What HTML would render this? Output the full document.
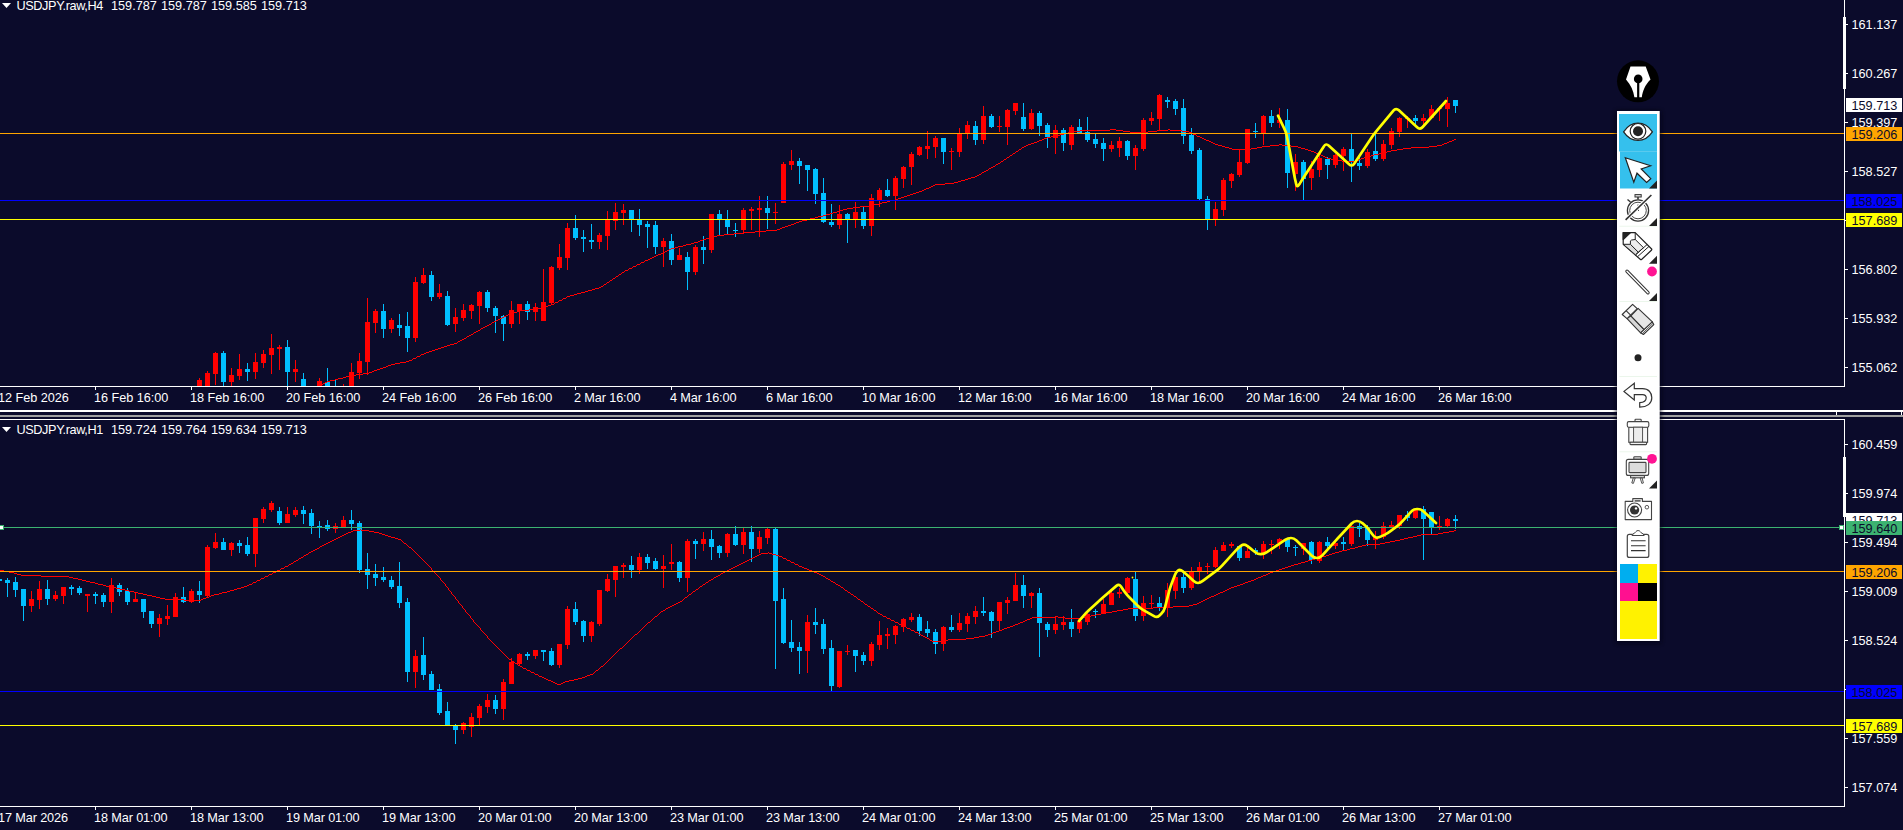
<!DOCTYPE html>
<html><head><meta charset="utf-8"><title>USDJPY</title>
<style>
html,body{margin:0;padding:0;background:#0b0b2b;}
body{width:1903px;height:830px;position:relative;overflow:hidden;font-family:"Liberation Sans",sans-serif;font-size:12.7px;color:#fff;line-height:14px}
.t{position:absolute;white-space:pre;height:14px}
.pl{position:absolute;left:1851.5px;height:14px;white-space:pre}
.bx{position:absolute;left:1846px;width:56px;height:14px;color:#0b0b2b}
.bx span{position:absolute;left:5.5px;top:1px}
.sym{letter-spacing:-0.39px}
.nums{word-spacing:1.5px}

</style></head><body>
<svg width="1903" height="830" viewBox="0 0 1903 830" style="position:absolute;left:0;top:0" shape-rendering="crispEdges">
<g>
<rect x="199" y="378" width="1" height="8" fill="#ff0000"/>
<rect x="197" y="380" width="5" height="6" fill="#ff0000"/>
<rect x="207" y="371" width="1" height="15" fill="#ff0000"/>
<rect x="205" y="373" width="5" height="13" fill="#ff0000"/>
<rect x="215" y="352" width="1" height="33" fill="#ff0000"/>
<rect x="213" y="353" width="5" height="21" fill="#ff0000"/>
<rect x="223" y="351" width="1" height="35" fill="#00bfff"/>
<rect x="221" y="353" width="5" height="29" fill="#00bfff"/>
<rect x="231" y="368" width="1" height="18" fill="#ff0000"/>
<rect x="229" y="375" width="5" height="7" fill="#ff0000"/>
<rect x="239" y="354" width="1" height="26" fill="#ff0000"/>
<rect x="237" y="369" width="5" height="7" fill="#ff0000"/>
<rect x="247" y="363" width="1" height="18" fill="#00bfff"/>
<rect x="245" y="369" width="5" height="3" fill="#00bfff"/>
<rect x="255" y="353" width="1" height="26" fill="#ff0000"/>
<rect x="253" y="362" width="5" height="10" fill="#ff0000"/>
<rect x="263" y="350" width="1" height="18" fill="#ff0000"/>
<rect x="261" y="354" width="5" height="9" fill="#ff0000"/>
<rect x="271" y="334" width="1" height="40" fill="#ff0000"/>
<rect x="269" y="348" width="5" height="7" fill="#ff0000"/>
<rect x="279" y="345" width="1" height="25" fill="#ff0000"/>
<rect x="277" y="347" width="5" height="2" fill="#ff0000"/>
<rect x="287" y="340" width="1" height="46" fill="#00bfff"/>
<rect x="285" y="347" width="5" height="25" fill="#00bfff"/>
<rect x="295" y="360" width="1" height="22" fill="#ff0000"/>
<rect x="293" y="369" width="5" height="3" fill="#ff0000"/>
<rect x="303" y="373" width="1" height="13" fill="#00bfff"/>
<rect x="301" y="379" width="5" height="7" fill="#00bfff"/>
<rect x="319" y="378" width="1" height="8" fill="#ff0000"/>
<rect x="317" y="381" width="5" height="5" fill="#ff0000"/>
<rect x="327" y="368" width="1" height="18" fill="#00bfff"/>
<rect x="325" y="382" width="5" height="4" fill="#00bfff"/>
<rect x="335" y="380" width="1" height="6" fill="#00bfff"/>
<rect x="343" y="384" width="1" height="2" fill="#ff0000"/>
<rect x="351" y="363" width="1" height="23" fill="#ff0000"/>
<rect x="349" y="372" width="5" height="14" fill="#ff0000"/>
<rect x="359" y="353" width="1" height="26" fill="#ff0000"/>
<rect x="357" y="361" width="5" height="12" fill="#ff0000"/>
<rect x="367" y="298" width="1" height="77" fill="#ff0000"/>
<rect x="365" y="322" width="5" height="40" fill="#ff0000"/>
<rect x="375" y="309" width="1" height="24" fill="#ff0000"/>
<rect x="373" y="311" width="5" height="12" fill="#ff0000"/>
<rect x="383" y="304" width="1" height="34" fill="#00bfff"/>
<rect x="381" y="311" width="5" height="18" fill="#00bfff"/>
<rect x="391" y="318" width="1" height="15" fill="#ff0000"/>
<rect x="389" y="320" width="5" height="9" fill="#ff0000"/>
<rect x="399" y="314" width="1" height="22" fill="#00bfff"/>
<rect x="397" y="325" width="5" height="3" fill="#00bfff"/>
<rect x="407" y="312" width="1" height="40" fill="#00bfff"/>
<rect x="405" y="326" width="5" height="12" fill="#00bfff"/>
<rect x="415" y="277" width="1" height="65" fill="#ff0000"/>
<rect x="413" y="282" width="5" height="56" fill="#ff0000"/>
<rect x="423" y="268" width="1" height="16" fill="#ff0000"/>
<rect x="421" y="275" width="5" height="8" fill="#ff0000"/>
<rect x="431" y="271" width="1" height="30" fill="#00bfff"/>
<rect x="429" y="275" width="5" height="22" fill="#00bfff"/>
<rect x="439" y="284" width="1" height="15" fill="#ff0000"/>
<rect x="437" y="293" width="5" height="4" fill="#ff0000"/>
<rect x="447" y="291" width="1" height="35" fill="#00bfff"/>
<rect x="445" y="296" width="5" height="29" fill="#00bfff"/>
<rect x="455" y="308" width="1" height="24" fill="#ff0000"/>
<rect x="453" y="317" width="5" height="7" fill="#ff0000"/>
<rect x="463" y="304" width="1" height="17" fill="#ff0000"/>
<rect x="461" y="310" width="5" height="8" fill="#ff0000"/>
<rect x="471" y="304" width="1" height="15" fill="#ff0000"/>
<rect x="469" y="305" width="5" height="6" fill="#ff0000"/>
<rect x="479" y="291" width="1" height="33" fill="#ff0000"/>
<rect x="477" y="292" width="5" height="14" fill="#ff0000"/>
<rect x="487" y="290" width="1" height="22" fill="#00bfff"/>
<rect x="485" y="292" width="5" height="16" fill="#00bfff"/>
<rect x="495" y="306" width="1" height="27" fill="#00bfff"/>
<rect x="493" y="308" width="5" height="8" fill="#00bfff"/>
<rect x="503" y="315" width="1" height="26" fill="#00bfff"/>
<rect x="501" y="316" width="5" height="8" fill="#00bfff"/>
<rect x="511" y="301" width="1" height="27" fill="#ff0000"/>
<rect x="509" y="310" width="5" height="14" fill="#ff0000"/>
<rect x="519" y="304" width="1" height="20" fill="#ff0000"/>
<rect x="517" y="304" width="5" height="7" fill="#ff0000"/>
<rect x="527" y="301" width="1" height="19" fill="#00bfff"/>
<rect x="525" y="304" width="5" height="8" fill="#00bfff"/>
<rect x="535" y="303" width="1" height="18" fill="#ff0000"/>
<rect x="533" y="307" width="5" height="5" fill="#ff0000"/>
<rect x="543" y="269" width="1" height="52" fill="#ff0000"/>
<rect x="541" y="302" width="5" height="19" fill="#ff0000"/>
<rect x="551" y="266" width="1" height="39" fill="#ff0000"/>
<rect x="549" y="267" width="5" height="36" fill="#ff0000"/>
<rect x="559" y="244" width="1" height="26" fill="#ff0000"/>
<rect x="557" y="257" width="5" height="11" fill="#ff0000"/>
<rect x="567" y="223" width="1" height="47" fill="#ff0000"/>
<rect x="565" y="228" width="5" height="30" fill="#ff0000"/>
<rect x="575" y="215" width="1" height="25" fill="#00bfff"/>
<rect x="573" y="228" width="5" height="10" fill="#00bfff"/>
<rect x="583" y="230" width="1" height="22" fill="#00bfff"/>
<rect x="581" y="237" width="5" height="2" fill="#00bfff"/>
<rect x="591" y="224" width="1" height="25" fill="#00bfff"/>
<rect x="589" y="240" width="5" height="2" fill="#00bfff"/>
<rect x="599" y="233" width="1" height="16" fill="#ff0000"/>
<rect x="597" y="235" width="5" height="7" fill="#ff0000"/>
<rect x="607" y="211" width="1" height="39" fill="#ff0000"/>
<rect x="605" y="219" width="5" height="17" fill="#ff0000"/>
<rect x="615" y="203" width="1" height="27" fill="#ff0000"/>
<rect x="613" y="212" width="5" height="9" fill="#ff0000"/>
<rect x="623" y="204" width="1" height="21" fill="#ff0000"/>
<rect x="621" y="210" width="5" height="3" fill="#ff0000"/>
<rect x="631" y="210" width="1" height="22" fill="#00bfff"/>
<rect x="629" y="210" width="5" height="9" fill="#00bfff"/>
<rect x="639" y="209" width="1" height="27" fill="#00bfff"/>
<rect x="637" y="220" width="5" height="5" fill="#00bfff"/>
<rect x="647" y="221" width="1" height="27" fill="#00bfff"/>
<rect x="645" y="224" width="5" height="3" fill="#00bfff"/>
<rect x="655" y="221" width="1" height="33" fill="#00bfff"/>
<rect x="653" y="225" width="5" height="22" fill="#00bfff"/>
<rect x="663" y="238" width="1" height="29" fill="#ff0000"/>
<rect x="661" y="241" width="5" height="6" fill="#ff0000"/>
<rect x="671" y="234" width="1" height="31" fill="#00bfff"/>
<rect x="669" y="241" width="5" height="19" fill="#00bfff"/>
<rect x="679" y="248" width="1" height="12" fill="#ff0000"/>
<rect x="677" y="255" width="5" height="5" fill="#ff0000"/>
<rect x="687" y="252" width="1" height="38" fill="#00bfff"/>
<rect x="685" y="257" width="5" height="15" fill="#00bfff"/>
<rect x="695" y="245" width="1" height="30" fill="#ff0000"/>
<rect x="693" y="247" width="5" height="25" fill="#ff0000"/>
<rect x="703" y="236" width="1" height="28" fill="#00bfff"/>
<rect x="701" y="247" width="5" height="3" fill="#00bfff"/>
<rect x="711" y="214" width="1" height="39" fill="#ff0000"/>
<rect x="709" y="214" width="5" height="36" fill="#ff0000"/>
<rect x="719" y="210" width="1" height="25" fill="#00bfff"/>
<rect x="717" y="214" width="5" height="5" fill="#00bfff"/>
<rect x="727" y="210" width="1" height="24" fill="#00bfff"/>
<rect x="725" y="220" width="5" height="7" fill="#00bfff"/>
<rect x="735" y="223" width="1" height="14" fill="#00bfff"/>
<rect x="733" y="230" width="5" height="1" fill="#00bfff"/>
<rect x="743" y="208" width="1" height="25" fill="#ff0000"/>
<rect x="741" y="210" width="5" height="20" fill="#ff0000"/>
<rect x="751" y="207" width="1" height="23" fill="#ff0000"/>
<rect x="749" y="209" width="5" height="2" fill="#ff0000"/>
<rect x="759" y="196" width="1" height="41" fill="#ff0000"/>
<rect x="757" y="208" width="5" height="2" fill="#ff0000"/>
<rect x="767" y="196" width="1" height="33" fill="#00bfff"/>
<rect x="765" y="208" width="5" height="5" fill="#00bfff"/>
<rect x="775" y="203" width="1" height="21" fill="#ff0000"/>
<rect x="773" y="212" width="5" height="1" fill="#ff0000"/>
<rect x="783" y="162" width="1" height="41" fill="#ff0000"/>
<rect x="781" y="164" width="5" height="39" fill="#ff0000"/>
<rect x="791" y="150" width="1" height="20" fill="#ff0000"/>
<rect x="789" y="161" width="5" height="4" fill="#ff0000"/>
<rect x="799" y="158" width="1" height="26" fill="#00bfff"/>
<rect x="797" y="161" width="5" height="5" fill="#00bfff"/>
<rect x="807" y="165" width="1" height="26" fill="#00bfff"/>
<rect x="805" y="165" width="5" height="5" fill="#00bfff"/>
<rect x="815" y="168" width="1" height="36" fill="#00bfff"/>
<rect x="813" y="169" width="5" height="25" fill="#00bfff"/>
<rect x="823" y="178" width="1" height="45" fill="#00bfff"/>
<rect x="821" y="193" width="5" height="29" fill="#00bfff"/>
<rect x="831" y="204" width="1" height="23" fill="#00bfff"/>
<rect x="829" y="222" width="5" height="3" fill="#00bfff"/>
<rect x="839" y="205" width="1" height="24" fill="#ff0000"/>
<rect x="837" y="214" width="5" height="11" fill="#ff0000"/>
<rect x="847" y="213" width="1" height="30" fill="#00bfff"/>
<rect x="845" y="214" width="5" height="6" fill="#00bfff"/>
<rect x="855" y="202" width="1" height="26" fill="#ff0000"/>
<rect x="853" y="212" width="5" height="8" fill="#ff0000"/>
<rect x="863" y="206" width="1" height="23" fill="#00bfff"/>
<rect x="861" y="212" width="5" height="14" fill="#00bfff"/>
<rect x="871" y="194" width="1" height="42" fill="#ff0000"/>
<rect x="869" y="198" width="5" height="28" fill="#ff0000"/>
<rect x="879" y="188" width="1" height="19" fill="#ff0000"/>
<rect x="877" y="190" width="5" height="10" fill="#ff0000"/>
<rect x="887" y="179" width="1" height="18" fill="#00bfff"/>
<rect x="885" y="190" width="5" height="6" fill="#00bfff"/>
<rect x="895" y="176" width="1" height="34" fill="#ff0000"/>
<rect x="893" y="178" width="5" height="18" fill="#ff0000"/>
<rect x="903" y="166" width="1" height="22" fill="#ff0000"/>
<rect x="901" y="167" width="5" height="12" fill="#ff0000"/>
<rect x="911" y="152" width="1" height="33" fill="#ff0000"/>
<rect x="909" y="154" width="5" height="13" fill="#ff0000"/>
<rect x="919" y="146" width="1" height="10" fill="#ff0000"/>
<rect x="917" y="147" width="5" height="8" fill="#ff0000"/>
<rect x="927" y="131" width="1" height="28" fill="#ff0000"/>
<rect x="925" y="146" width="5" height="3" fill="#ff0000"/>
<rect x="935" y="136" width="1" height="22" fill="#ff0000"/>
<rect x="933" y="138" width="5" height="9" fill="#ff0000"/>
<rect x="943" y="138" width="1" height="26" fill="#00bfff"/>
<rect x="941" y="138" width="5" height="14" fill="#00bfff"/>
<rect x="951" y="148" width="1" height="22" fill="#ff0000"/>
<rect x="949" y="151" width="5" height="1" fill="#ff0000"/>
<rect x="959" y="128" width="1" height="29" fill="#ff0000"/>
<rect x="957" y="134" width="5" height="18" fill="#ff0000"/>
<rect x="967" y="121" width="1" height="18" fill="#ff0000"/>
<rect x="965" y="125" width="5" height="8" fill="#ff0000"/>
<rect x="975" y="121" width="1" height="24" fill="#00bfff"/>
<rect x="973" y="126" width="5" height="14" fill="#00bfff"/>
<rect x="983" y="106" width="1" height="38" fill="#ff0000"/>
<rect x="981" y="116" width="5" height="24" fill="#ff0000"/>
<rect x="991" y="114" width="1" height="14" fill="#00bfff"/>
<rect x="989" y="116" width="5" height="11" fill="#00bfff"/>
<rect x="999" y="116" width="1" height="16" fill="#ff0000"/>
<rect x="997" y="126" width="5" height="1" fill="#ff0000"/>
<rect x="1007" y="109" width="1" height="36" fill="#ff0000"/>
<rect x="1005" y="110" width="5" height="17" fill="#ff0000"/>
<rect x="1015" y="103" width="1" height="12" fill="#ff0000"/>
<rect x="1013" y="103" width="5" height="8" fill="#ff0000"/>
<rect x="1023" y="103" width="1" height="28" fill="#00bfff"/>
<rect x="1021" y="117" width="5" height="12" fill="#00bfff"/>
<rect x="1031" y="109" width="1" height="21" fill="#ff0000"/>
<rect x="1029" y="113" width="5" height="16" fill="#ff0000"/>
<rect x="1039" y="111" width="1" height="25" fill="#00bfff"/>
<rect x="1037" y="113" width="5" height="13" fill="#00bfff"/>
<rect x="1047" y="123" width="1" height="25" fill="#00bfff"/>
<rect x="1045" y="125" width="5" height="12" fill="#00bfff"/>
<rect x="1055" y="125" width="1" height="29" fill="#ff0000"/>
<rect x="1053" y="130" width="5" height="8" fill="#ff0000"/>
<rect x="1063" y="128" width="1" height="23" fill="#00bfff"/>
<rect x="1061" y="130" width="5" height="13" fill="#00bfff"/>
<rect x="1071" y="125" width="1" height="25" fill="#ff0000"/>
<rect x="1069" y="127" width="5" height="18" fill="#ff0000"/>
<rect x="1079" y="119" width="1" height="14" fill="#00bfff"/>
<rect x="1077" y="127" width="5" height="6" fill="#00bfff"/>
<rect x="1087" y="117" width="1" height="25" fill="#00bfff"/>
<rect x="1085" y="132" width="5" height="8" fill="#00bfff"/>
<rect x="1095" y="134" width="1" height="14" fill="#00bfff"/>
<rect x="1093" y="139" width="5" height="5" fill="#00bfff"/>
<rect x="1103" y="138" width="1" height="23" fill="#00bfff"/>
<rect x="1101" y="143" width="5" height="6" fill="#00bfff"/>
<rect x="1111" y="141" width="1" height="11" fill="#ff0000"/>
<rect x="1109" y="145" width="5" height="4" fill="#ff0000"/>
<rect x="1119" y="137" width="1" height="20" fill="#ff0000"/>
<rect x="1117" y="141" width="5" height="7" fill="#ff0000"/>
<rect x="1127" y="140" width="1" height="20" fill="#00bfff"/>
<rect x="1125" y="141" width="5" height="15" fill="#00bfff"/>
<rect x="1135" y="145" width="1" height="25" fill="#ff0000"/>
<rect x="1133" y="148" width="5" height="8" fill="#ff0000"/>
<rect x="1143" y="118" width="1" height="33" fill="#ff0000"/>
<rect x="1141" y="120" width="5" height="29" fill="#ff0000"/>
<rect x="1151" y="112" width="1" height="13" fill="#ff0000"/>
<rect x="1149" y="118" width="5" height="3" fill="#ff0000"/>
<rect x="1159" y="94" width="1" height="36" fill="#ff0000"/>
<rect x="1157" y="95" width="5" height="24" fill="#ff0000"/>
<rect x="1167" y="97" width="1" height="11" fill="#00bfff"/>
<rect x="1165" y="100" width="5" height="2" fill="#00bfff"/>
<rect x="1175" y="99" width="1" height="16" fill="#00bfff"/>
<rect x="1173" y="101" width="5" height="8" fill="#00bfff"/>
<rect x="1183" y="99" width="1" height="45" fill="#00bfff"/>
<rect x="1181" y="108" width="5" height="28" fill="#00bfff"/>
<rect x="1191" y="128" width="1" height="26" fill="#00bfff"/>
<rect x="1189" y="135" width="5" height="16" fill="#00bfff"/>
<rect x="1199" y="148" width="1" height="52" fill="#00bfff"/>
<rect x="1197" y="150" width="5" height="49" fill="#00bfff"/>
<rect x="1207" y="196" width="1" height="34" fill="#00bfff"/>
<rect x="1205" y="199" width="5" height="20" fill="#00bfff"/>
<rect x="1215" y="202" width="1" height="24" fill="#ff0000"/>
<rect x="1213" y="209" width="5" height="10" fill="#ff0000"/>
<rect x="1223" y="178" width="1" height="38" fill="#ff0000"/>
<rect x="1221" y="180" width="5" height="30" fill="#ff0000"/>
<rect x="1231" y="173" width="1" height="15" fill="#ff0000"/>
<rect x="1229" y="174" width="5" height="7" fill="#ff0000"/>
<rect x="1239" y="149" width="1" height="28" fill="#ff0000"/>
<rect x="1237" y="162" width="5" height="13" fill="#ff0000"/>
<rect x="1247" y="129" width="1" height="35" fill="#ff0000"/>
<rect x="1245" y="129" width="5" height="34" fill="#ff0000"/>
<rect x="1255" y="123" width="1" height="15" fill="#00bfff"/>
<rect x="1253" y="131" width="5" height="1" fill="#00bfff"/>
<rect x="1263" y="115" width="1" height="30" fill="#ff0000"/>
<rect x="1261" y="116" width="5" height="17" fill="#ff0000"/>
<rect x="1271" y="110" width="1" height="17" fill="#00bfff"/>
<rect x="1269" y="116" width="5" height="7" fill="#00bfff"/>
<rect x="1279" y="108" width="1" height="20" fill="#ff0000"/>
<rect x="1277" y="120" width="5" height="3" fill="#ff0000"/>
<rect x="1287" y="109" width="1" height="79" fill="#00bfff"/>
<rect x="1285" y="120" width="5" height="53" fill="#00bfff"/>
<rect x="1295" y="154" width="1" height="37" fill="#ff0000"/>
<rect x="1293" y="162" width="5" height="12" fill="#ff0000"/>
<rect x="1303" y="160" width="1" height="40" fill="#00bfff"/>
<rect x="1301" y="162" width="5" height="17" fill="#00bfff"/>
<rect x="1311" y="161" width="1" height="29" fill="#ff0000"/>
<rect x="1309" y="169" width="5" height="9" fill="#ff0000"/>
<rect x="1319" y="154" width="1" height="23" fill="#ff0000"/>
<rect x="1317" y="158" width="5" height="12" fill="#ff0000"/>
<rect x="1327" y="157" width="1" height="22" fill="#00bfff"/>
<rect x="1325" y="159" width="5" height="6" fill="#00bfff"/>
<rect x="1335" y="154" width="1" height="14" fill="#ff0000"/>
<rect x="1333" y="155" width="5" height="10" fill="#ff0000"/>
<rect x="1343" y="147" width="1" height="24" fill="#ff0000"/>
<rect x="1341" y="149" width="5" height="7" fill="#ff0000"/>
<rect x="1351" y="134" width="1" height="48" fill="#00bfff"/>
<rect x="1349" y="149" width="5" height="13" fill="#00bfff"/>
<rect x="1359" y="154" width="1" height="16" fill="#00bfff"/>
<rect x="1357" y="163" width="5" height="3" fill="#00bfff"/>
<rect x="1367" y="149" width="1" height="19" fill="#ff0000"/>
<rect x="1365" y="152" width="5" height="14" fill="#ff0000"/>
<rect x="1375" y="134" width="1" height="27" fill="#00bfff"/>
<rect x="1373" y="151" width="5" height="8" fill="#00bfff"/>
<rect x="1383" y="140" width="1" height="21" fill="#ff0000"/>
<rect x="1381" y="144" width="5" height="15" fill="#ff0000"/>
<rect x="1391" y="128" width="1" height="21" fill="#ff0000"/>
<rect x="1389" y="131" width="5" height="14" fill="#ff0000"/>
<rect x="1399" y="117" width="1" height="20" fill="#ff0000"/>
<rect x="1397" y="118" width="5" height="14" fill="#ff0000"/>
<rect x="1407" y="116" width="1" height="12" fill="#ff0000"/>
<rect x="1405" y="118" width="5" height="1" fill="#ff0000"/>
<rect x="1415" y="115" width="1" height="10" fill="#00bfff"/>
<rect x="1413" y="118" width="5" height="3" fill="#00bfff"/>
<rect x="1423" y="114" width="1" height="11" fill="#ff0000"/>
<rect x="1421" y="118" width="5" height="3" fill="#ff0000"/>
<rect x="1431" y="105" width="1" height="14" fill="#ff0000"/>
<rect x="1429" y="109" width="5" height="9" fill="#ff0000"/>
<rect x="1439" y="106" width="1" height="15" fill="#ff0000"/>
<rect x="1437" y="108" width="5" height="1" fill="#ff0000"/>
<rect x="1447" y="97" width="1" height="30" fill="#ff0000"/>
<rect x="1445" y="103" width="5" height="6" fill="#ff0000"/>
<rect x="1455" y="100" width="1" height="13" fill="#00bfff"/>
<rect x="1453" y="100" width="5" height="6" fill="#00bfff"/>
</g>
<path d="M316,386h2v1h-2zM318,385h2v1h-2zM320,384h3v1h-3zM323,383h2v1h-2zM325,382h2v1h-2zM327,381h3v1h-3zM330,380h5v1h-5zM335,379h3v1h-3zM338,378h5v1h-5zM343,377h3v1h-3zM346,376h5v1h-5zM351,375h5v1h-5zM356,374h7v1h-7zM363,373h6v1h-6zM369,372h3v1h-3zM372,371h2v1h-2zM374,370h3v1h-3zM377,369h3v1h-3zM380,368h3v1h-3zM383,367h3v1h-3zM386,366h2v1h-2zM388,365h3v1h-3zM391,364h4v1h-4zM395,363h5v1h-5zM400,362h6v1h-6zM406,361h3v1h-3zM409,360h3v1h-3zM412,359h1v1h-1zM413,358h3v1h-3zM416,357h1v1h-1zM417,356h3v1h-3zM420,355h1v1h-1zM421,354h3v1h-3zM424,353h2v1h-2zM426,352h3v1h-3zM429,351h3v1h-3zM432,350h3v1h-3zM435,349h3v1h-3zM438,348h3v1h-3zM441,347h3v1h-3zM444,346h3v1h-3zM447,345h3v1h-3zM450,344h4v1h-4zM454,343h3v1h-3zM457,342h1v1h-1zM458,341h2v1h-2zM460,340h2v1h-2zM462,339h2v1h-2zM464,338h2v1h-2zM466,337h1v1h-1zM467,336h2v1h-2zM469,335h2v1h-2zM471,334h2v1h-2zM473,333h1v1h-1zM474,332h2v1h-2zM476,331h2v1h-2zM478,330h2v1h-2zM480,329h1v1h-1zM481,328h2v1h-2zM483,327h2v1h-2zM485,326h2v1h-2zM487,325h2v1h-2zM489,324h2v1h-2zM491,323h1v1h-1zM492,322h2v1h-2zM494,321h2v1h-2zM496,320h2v1h-2zM498,319h2v1h-2zM500,318h2v1h-2zM502,317h2v1h-2zM504,316h2v1h-2zM506,315h2v1h-2zM508,314h3v1h-3zM511,313h3v1h-3zM514,312h3v1h-3zM517,311h2v1h-2zM519,310h10v1h-10zM529,309h9v1h-9zM538,308h3v1h-3zM541,307h3v1h-3zM544,306h4v1h-4zM548,305h3v1h-3zM551,304h3v1h-3zM554,303h1v1h-1zM555,302h3v1h-3zM558,301h1v1h-1zM559,300h3v1h-3zM562,299h1v1h-1zM563,298h3v1h-3zM566,297h1v1h-1zM567,296h3v1h-3zM570,295h4v1h-4zM574,294h3v1h-3zM577,293h4v1h-4zM581,292h4v1h-4zM585,291h3v1h-3zM588,290h4v1h-4zM592,289h3v1h-3zM595,288h4v1h-4zM599,287h2v1h-2zM601,286h2v1h-2zM603,285h1v1h-1zM604,284h2v1h-2zM606,283h1v1h-1zM607,282h2v1h-2zM609,281h1v1h-1zM610,280h2v1h-2zM612,279h1v1h-1zM613,278h2v1h-2zM615,277h1v1h-1zM616,276h2v1h-2zM618,275h1v1h-1zM619,274h2v1h-2zM621,273h1v1h-1zM622,272h2v1h-2zM624,271h1v1h-1zM625,270h3v1h-3zM628,269h1v1h-1zM629,268h3v1h-3zM632,267h1v1h-1zM633,266h3v1h-3zM636,265h1v1h-1zM637,264h3v1h-3zM640,263h1v1h-1zM641,262h3v1h-3zM644,261h1v1h-1zM645,260h3v1h-3zM648,259h2v1h-2zM650,258h2v1h-2zM652,257h2v1h-2zM654,256h2v1h-2zM656,255h2v1h-2zM658,254h3v1h-3zM661,253h2v1h-2zM663,252h2v1h-2zM665,251h2v1h-2zM667,250h2v1h-2zM669,249h2v1h-2zM671,248h4v1h-4zM675,247h3v1h-3zM678,246h5v1h-5zM683,245h3v1h-3zM686,244h5v1h-5zM691,243h3v1h-3zM694,242h4v1h-4zM698,241h2v1h-2zM700,240h3v1h-3zM703,239h3v1h-3zM706,238h3v1h-3zM709,237h2v1h-2zM711,236h6v1h-6zM717,235h7v1h-7zM724,234h10v1h-10zM734,233h10v1h-10zM744,232h11v1h-11zM755,231h11v1h-11zM766,230h11v1h-11zM777,229h3v1h-3zM780,228h2v1h-2zM782,227h3v1h-3zM785,226h3v1h-3zM788,225h3v1h-3zM791,224h3v1h-3zM794,223h2v1h-2zM796,222h3v1h-3zM799,221h3v1h-3zM802,220h5v1h-5zM807,219h3v1h-3zM810,218h5v1h-5zM815,217h3v1h-3zM818,216h5v1h-5zM823,215h3v1h-3zM826,214h4v1h-4zM830,213h3v1h-3zM833,212h4v1h-4zM837,211h3v1h-3zM840,210h3v1h-3zM843,209h4v1h-4zM847,208h6v1h-6zM853,207h7v1h-7zM860,206h9v1h-9zM869,205h5v1h-5zM874,204h5v1h-5zM879,203h3v1h-3zM882,202h5v1h-5zM887,201h3v1h-3zM890,200h5v1h-5zM895,199h3v1h-3zM898,198h3v1h-3zM901,197h3v1h-3zM904,196h3v1h-3zM907,195h3v1h-3zM910,194h3v1h-3zM913,193h3v1h-3zM916,192h3v1h-3zM919,191h3v1h-3zM922,190h2v1h-2zM924,189h2v1h-2zM926,188h3v1h-3zM929,187h2v1h-2zM931,186h2v1h-2zM933,185h2v1h-2zM935,184h10v1h-10zM945,183h9v1h-9zM954,182h4v1h-4zM958,181h3v1h-3zM961,180h4v1h-4zM965,179h3v1h-3zM968,178h3v1h-3zM971,177h4v1h-4zM975,176h2v1h-2zM977,175h2v1h-2zM979,174h2v1h-2zM981,173h1v1h-1zM982,172h2v1h-2zM984,171h2v1h-2zM986,170h2v1h-2zM988,169h1v1h-1zM989,168h2v1h-2zM991,167h2v1h-2zM993,166h2v1h-2zM995,165h1v1h-1zM996,164h2v1h-2zM998,163h2v1h-2zM1000,162h1v1h-1zM1001,161h2v1h-2zM1003,160h1v1h-1zM1004,159h2v1h-2zM1006,158h1v1h-1zM1007,157h2v1h-2zM1009,156h1v1h-1zM1010,155h2v1h-2zM1012,154h1v1h-1zM1013,153h2v1h-2zM1015,152h1v1h-1zM1016,151h2v1h-2zM1018,150h1v1h-1zM1019,149h2v1h-2zM1021,148h1v1h-1zM1022,147h2v1h-2zM1024,146h2v1h-2zM1026,145h2v1h-2zM1028,144h3v1h-3zM1031,143h3v1h-3zM1034,142h3v1h-3zM1037,141h2v1h-2zM1039,140h3v1h-3zM1042,139h2v1h-2zM1044,138h3v1h-3zM1047,137h4v1h-4zM1051,136h4v1h-4zM1055,135h5v1h-5zM1060,134h4v1h-4zM1064,133h4v1h-4zM1068,132h5v1h-5zM1073,131h7v1h-7zM1080,130h30v1h-30zM1110,129h6v1h-6zM1116,130h7v1h-7zM1123,131h7v1h-7zM1130,132h18v1h-18zM1148,131h9v1h-9zM1157,130h11v1h-11zM1168,129h2v1h-2zM1170,130h12v1h-12zM1182,131h7v1h-7zM1189,132h3v1h-3zM1192,133h1v1h-1zM1193,134h3v1h-3zM1196,135h1v1h-1zM1197,136h3v1h-3zM1200,137h2v1h-2zM1202,138h2v1h-2zM1204,139h2v1h-2zM1206,140h3v1h-3zM1209,141h2v1h-2zM1211,142h2v1h-2zM1213,143h2v1h-2zM1215,144h3v1h-3zM1218,145h4v1h-4zM1222,146h3v1h-3zM1225,147h4v1h-4zM1229,148h3v1h-3zM1232,149h19v1h-19zM1251,148h6v1h-6zM1257,147h5v1h-5zM1262,146h8v1h-8zM1270,145h9v1h-9zM1279,144h3v1h-3zM1282,145h9v1h-9zM1291,146h7v1h-7zM1298,147h3v1h-3zM1301,148h4v1h-4zM1305,149h3v1h-3zM1308,150h3v1h-3zM1311,151h3v1h-3zM1314,152h2v1h-2zM1316,153h2v1h-2zM1318,154h3v1h-3zM1321,155h2v1h-2zM1323,156h2v1h-2zM1325,157h2v1h-2zM1327,158h4v1h-4zM1331,159h5v1h-5zM1336,160h6v1h-6zM1342,161h14v1h-14zM1356,160h3v1h-3zM1359,159h2v1h-2zM1361,158h3v1h-3zM1364,157h3v1h-3zM1367,156h4v1h-4zM1371,155h3v1h-3zM1374,154h5v1h-5zM1379,153h3v1h-3zM1382,152h5v1h-5zM1387,151h4v1h-4zM1391,150h6v1h-6zM1397,149h6v1h-6zM1403,148h8v1h-8zM1411,147h18v1h-18zM1429,146h8v1h-8zM1437,145h5v1h-5zM1442,144h2v1h-2zM1444,143h3v1h-3zM1447,142h2v1h-2zM1449,141h3v1h-3zM1452,140h2v1h-2zM1454,139h2v1h-2z" fill="#ff0000"/>
<g>
<rect x="-1" y="578" width="1" height="5" fill="#00bfff"/>
<rect x="-3" y="579" width="5" height="2" fill="#00bfff"/>
<rect x="7" y="578" width="1" height="19" fill="#00bfff"/>
<rect x="5" y="580" width="5" height="3" fill="#00bfff"/>
<rect x="15" y="577" width="1" height="20" fill="#00bfff"/>
<rect x="13" y="582" width="5" height="8" fill="#00bfff"/>
<rect x="23" y="589" width="1" height="32" fill="#00bfff"/>
<rect x="21" y="589" width="5" height="17" fill="#00bfff"/>
<rect x="31" y="591" width="1" height="21" fill="#ff0000"/>
<rect x="29" y="599" width="5" height="7" fill="#ff0000"/>
<rect x="39" y="581" width="1" height="28" fill="#ff0000"/>
<rect x="37" y="589" width="5" height="11" fill="#ff0000"/>
<rect x="47" y="580" width="1" height="25" fill="#00bfff"/>
<rect x="45" y="589" width="5" height="10" fill="#00bfff"/>
<rect x="55" y="591" width="1" height="10" fill="#ff0000"/>
<rect x="53" y="595" width="5" height="4" fill="#ff0000"/>
<rect x="63" y="587" width="1" height="17" fill="#ff0000"/>
<rect x="61" y="587" width="5" height="9" fill="#ff0000"/>
<rect x="71" y="585" width="1" height="10" fill="#00bfff"/>
<rect x="69" y="587" width="5" height="2" fill="#00bfff"/>
<rect x="79" y="586" width="1" height="9" fill="#00bfff"/>
<rect x="77" y="588" width="5" height="5" fill="#00bfff"/>
<rect x="87" y="594" width="1" height="18" fill="#ff0000"/>
<rect x="85" y="594" width="5" height="2" fill="#ff0000"/>
<rect x="95" y="592" width="1" height="12" fill="#00bfff"/>
<rect x="93" y="594" width="5" height="2" fill="#00bfff"/>
<rect x="103" y="593" width="1" height="14" fill="#00bfff"/>
<rect x="101" y="595" width="5" height="7" fill="#00bfff"/>
<rect x="111" y="578" width="1" height="35" fill="#ff0000"/>
<rect x="109" y="585" width="5" height="17" fill="#ff0000"/>
<rect x="119" y="583" width="1" height="13" fill="#00bfff"/>
<rect x="117" y="585" width="5" height="7" fill="#00bfff"/>
<rect x="127" y="588" width="1" height="17" fill="#00bfff"/>
<rect x="125" y="591" width="5" height="11" fill="#00bfff"/>
<rect x="135" y="593" width="1" height="9" fill="#ff0000"/>
<rect x="133" y="599" width="5" height="3" fill="#ff0000"/>
<rect x="143" y="599" width="1" height="19" fill="#00bfff"/>
<rect x="141" y="599" width="5" height="13" fill="#00bfff"/>
<rect x="151" y="611" width="1" height="17" fill="#00bfff"/>
<rect x="149" y="611" width="5" height="13" fill="#00bfff"/>
<rect x="159" y="614" width="1" height="23" fill="#ff0000"/>
<rect x="157" y="618" width="5" height="6" fill="#ff0000"/>
<rect x="167" y="605" width="1" height="20" fill="#ff0000"/>
<rect x="165" y="616" width="5" height="3" fill="#ff0000"/>
<rect x="175" y="593" width="1" height="24" fill="#ff0000"/>
<rect x="173" y="597" width="5" height="20" fill="#ff0000"/>
<rect x="183" y="587" width="1" height="16" fill="#00bfff"/>
<rect x="181" y="597" width="5" height="5" fill="#00bfff"/>
<rect x="191" y="589" width="1" height="14" fill="#ff0000"/>
<rect x="189" y="591" width="5" height="11" fill="#ff0000"/>
<rect x="199" y="581" width="1" height="22" fill="#00bfff"/>
<rect x="197" y="591" width="5" height="4" fill="#00bfff"/>
<rect x="207" y="545" width="1" height="52" fill="#ff0000"/>
<rect x="205" y="547" width="5" height="49" fill="#ff0000"/>
<rect x="215" y="533" width="1" height="16" fill="#ff0000"/>
<rect x="213" y="542" width="5" height="6" fill="#ff0000"/>
<rect x="223" y="538" width="1" height="12" fill="#00bfff"/>
<rect x="221" y="542" width="5" height="8" fill="#00bfff"/>
<rect x="231" y="542" width="1" height="14" fill="#ff0000"/>
<rect x="229" y="543" width="5" height="7" fill="#ff0000"/>
<rect x="239" y="540" width="1" height="13" fill="#00bfff"/>
<rect x="237" y="543" width="5" height="3" fill="#00bfff"/>
<rect x="247" y="537" width="1" height="19" fill="#00bfff"/>
<rect x="245" y="545" width="5" height="9" fill="#00bfff"/>
<rect x="255" y="518" width="1" height="49" fill="#ff0000"/>
<rect x="253" y="518" width="5" height="36" fill="#ff0000"/>
<rect x="263" y="507" width="1" height="16" fill="#ff0000"/>
<rect x="261" y="509" width="5" height="10" fill="#ff0000"/>
<rect x="271" y="501" width="1" height="11" fill="#ff0000"/>
<rect x="269" y="503" width="5" height="7" fill="#ff0000"/>
<rect x="279" y="507" width="1" height="18" fill="#00bfff"/>
<rect x="277" y="511" width="5" height="12" fill="#00bfff"/>
<rect x="287" y="507" width="1" height="16" fill="#ff0000"/>
<rect x="285" y="514" width="5" height="9" fill="#ff0000"/>
<rect x="295" y="507" width="1" height="10" fill="#ff0000"/>
<rect x="293" y="510" width="5" height="5" fill="#ff0000"/>
<rect x="303" y="506" width="1" height="18" fill="#00bfff"/>
<rect x="301" y="510" width="5" height="4" fill="#00bfff"/>
<rect x="311" y="509" width="1" height="25" fill="#00bfff"/>
<rect x="309" y="513" width="5" height="13" fill="#00bfff"/>
<rect x="319" y="521" width="1" height="17" fill="#00bfff"/>
<rect x="317" y="526" width="5" height="1" fill="#00bfff"/>
<rect x="327" y="520" width="1" height="11" fill="#00bfff"/>
<rect x="325" y="525" width="5" height="4" fill="#00bfff"/>
<rect x="335" y="523" width="1" height="10" fill="#ff0000"/>
<rect x="333" y="526" width="5" height="3" fill="#ff0000"/>
<rect x="343" y="516" width="1" height="11" fill="#ff0000"/>
<rect x="341" y="520" width="5" height="7" fill="#ff0000"/>
<rect x="351" y="510" width="1" height="20" fill="#00bfff"/>
<rect x="349" y="520" width="5" height="4" fill="#00bfff"/>
<rect x="359" y="521" width="1" height="52" fill="#00bfff"/>
<rect x="357" y="523" width="5" height="47" fill="#00bfff"/>
<rect x="367" y="553" width="1" height="36" fill="#00bfff"/>
<rect x="365" y="569" width="5" height="6" fill="#00bfff"/>
<rect x="375" y="564" width="1" height="22" fill="#00bfff"/>
<rect x="373" y="574" width="5" height="4" fill="#00bfff"/>
<rect x="383" y="567" width="1" height="15" fill="#00bfff"/>
<rect x="381" y="577" width="5" height="3" fill="#00bfff"/>
<rect x="391" y="576" width="1" height="13" fill="#00bfff"/>
<rect x="389" y="580" width="5" height="7" fill="#00bfff"/>
<rect x="399" y="562" width="1" height="46" fill="#00bfff"/>
<rect x="397" y="586" width="5" height="17" fill="#00bfff"/>
<rect x="407" y="598" width="1" height="84" fill="#00bfff"/>
<rect x="405" y="602" width="5" height="70" fill="#00bfff"/>
<rect x="415" y="650" width="1" height="38" fill="#ff0000"/>
<rect x="413" y="656" width="5" height="16" fill="#ff0000"/>
<rect x="423" y="637" width="1" height="43" fill="#00bfff"/>
<rect x="421" y="655" width="5" height="20" fill="#00bfff"/>
<rect x="431" y="671" width="1" height="19" fill="#00bfff"/>
<rect x="429" y="674" width="5" height="16" fill="#00bfff"/>
<rect x="439" y="684" width="1" height="31" fill="#00bfff"/>
<rect x="437" y="689" width="5" height="24" fill="#00bfff"/>
<rect x="447" y="702" width="1" height="23" fill="#00bfff"/>
<rect x="445" y="711" width="5" height="14" fill="#00bfff"/>
<rect x="455" y="724" width="1" height="20" fill="#00bfff"/>
<rect x="453" y="726" width="5" height="4" fill="#00bfff"/>
<rect x="463" y="722" width="1" height="12" fill="#ff0000"/>
<rect x="461" y="723" width="5" height="7" fill="#ff0000"/>
<rect x="471" y="713" width="1" height="24" fill="#ff0000"/>
<rect x="469" y="717" width="5" height="10" fill="#ff0000"/>
<rect x="479" y="704" width="1" height="21" fill="#ff0000"/>
<rect x="477" y="706" width="5" height="12" fill="#ff0000"/>
<rect x="487" y="694" width="1" height="19" fill="#ff0000"/>
<rect x="485" y="700" width="5" height="7" fill="#ff0000"/>
<rect x="495" y="695" width="1" height="19" fill="#00bfff"/>
<rect x="493" y="700" width="5" height="9" fill="#00bfff"/>
<rect x="503" y="679" width="1" height="41" fill="#ff0000"/>
<rect x="501" y="682" width="5" height="27" fill="#ff0000"/>
<rect x="511" y="658" width="1" height="26" fill="#ff0000"/>
<rect x="509" y="662" width="5" height="22" fill="#ff0000"/>
<rect x="519" y="653" width="1" height="13" fill="#ff0000"/>
<rect x="517" y="654" width="5" height="10" fill="#ff0000"/>
<rect x="527" y="652" width="1" height="8" fill="#00bfff"/>
<rect x="525" y="654" width="5" height="2" fill="#00bfff"/>
<rect x="535" y="650" width="1" height="9" fill="#ff0000"/>
<rect x="533" y="650" width="5" height="6" fill="#ff0000"/>
<rect x="543" y="650" width="1" height="11" fill="#00bfff"/>
<rect x="541" y="650" width="5" height="2" fill="#00bfff"/>
<rect x="551" y="648" width="1" height="18" fill="#00bfff"/>
<rect x="549" y="651" width="5" height="14" fill="#00bfff"/>
<rect x="559" y="644" width="1" height="24" fill="#ff0000"/>
<rect x="557" y="644" width="5" height="21" fill="#ff0000"/>
<rect x="567" y="606" width="1" height="43" fill="#ff0000"/>
<rect x="565" y="609" width="5" height="36" fill="#ff0000"/>
<rect x="575" y="602" width="1" height="23" fill="#00bfff"/>
<rect x="573" y="609" width="5" height="13" fill="#00bfff"/>
<rect x="583" y="620" width="1" height="22" fill="#00bfff"/>
<rect x="581" y="621" width="5" height="15" fill="#00bfff"/>
<rect x="591" y="621" width="1" height="21" fill="#ff0000"/>
<rect x="589" y="622" width="5" height="14" fill="#ff0000"/>
<rect x="599" y="590" width="1" height="36" fill="#ff0000"/>
<rect x="597" y="590" width="5" height="34" fill="#ff0000"/>
<rect x="607" y="574" width="1" height="18" fill="#ff0000"/>
<rect x="605" y="579" width="5" height="12" fill="#ff0000"/>
<rect x="615" y="566" width="1" height="31" fill="#ff0000"/>
<rect x="613" y="566" width="5" height="14" fill="#ff0000"/>
<rect x="623" y="563" width="1" height="15" fill="#ff0000"/>
<rect x="621" y="565" width="5" height="2" fill="#ff0000"/>
<rect x="631" y="556" width="1" height="22" fill="#00bfff"/>
<rect x="629" y="565" width="5" height="5" fill="#00bfff"/>
<rect x="639" y="553" width="1" height="21" fill="#ff0000"/>
<rect x="637" y="557" width="5" height="13" fill="#ff0000"/>
<rect x="647" y="554" width="1" height="15" fill="#00bfff"/>
<rect x="645" y="557" width="5" height="6" fill="#00bfff"/>
<rect x="655" y="558" width="1" height="12" fill="#00bfff"/>
<rect x="653" y="561" width="5" height="8" fill="#00bfff"/>
<rect x="663" y="555" width="1" height="33" fill="#ff0000"/>
<rect x="661" y="566" width="5" height="3" fill="#ff0000"/>
<rect x="671" y="544" width="1" height="26" fill="#ff0000"/>
<rect x="669" y="562" width="5" height="2" fill="#ff0000"/>
<rect x="679" y="561" width="1" height="21" fill="#00bfff"/>
<rect x="677" y="562" width="5" height="16" fill="#00bfff"/>
<rect x="687" y="539" width="1" height="53" fill="#ff0000"/>
<rect x="685" y="541" width="5" height="37" fill="#ff0000"/>
<rect x="695" y="539" width="1" height="20" fill="#00bfff"/>
<rect x="693" y="541" width="5" height="3" fill="#00bfff"/>
<rect x="703" y="532" width="1" height="19" fill="#ff0000"/>
<rect x="701" y="539" width="5" height="5" fill="#ff0000"/>
<rect x="711" y="530" width="1" height="30" fill="#00bfff"/>
<rect x="709" y="539" width="5" height="8" fill="#00bfff"/>
<rect x="719" y="545" width="1" height="13" fill="#00bfff"/>
<rect x="717" y="546" width="5" height="7" fill="#00bfff"/>
<rect x="727" y="533" width="1" height="24" fill="#ff0000"/>
<rect x="725" y="534" width="5" height="19" fill="#ff0000"/>
<rect x="735" y="526" width="1" height="20" fill="#00bfff"/>
<rect x="733" y="534" width="5" height="11" fill="#00bfff"/>
<rect x="743" y="528" width="1" height="26" fill="#ff0000"/>
<rect x="741" y="532" width="5" height="13" fill="#ff0000"/>
<rect x="751" y="526" width="1" height="36" fill="#00bfff"/>
<rect x="749" y="532" width="5" height="17" fill="#00bfff"/>
<rect x="759" y="531" width="1" height="22" fill="#ff0000"/>
<rect x="757" y="537" width="5" height="12" fill="#ff0000"/>
<rect x="767" y="528" width="1" height="16" fill="#ff0000"/>
<rect x="765" y="529" width="5" height="9" fill="#ff0000"/>
<rect x="775" y="528" width="1" height="141" fill="#00bfff"/>
<rect x="773" y="529" width="5" height="72" fill="#00bfff"/>
<rect x="783" y="588" width="1" height="56" fill="#00bfff"/>
<rect x="781" y="599" width="5" height="44" fill="#00bfff"/>
<rect x="791" y="620" width="1" height="32" fill="#00bfff"/>
<rect x="789" y="642" width="5" height="6" fill="#00bfff"/>
<rect x="799" y="642" width="1" height="32" fill="#00bfff"/>
<rect x="797" y="647" width="5" height="4" fill="#00bfff"/>
<rect x="807" y="615" width="1" height="58" fill="#ff0000"/>
<rect x="805" y="622" width="5" height="29" fill="#ff0000"/>
<rect x="815" y="608" width="1" height="26" fill="#00bfff"/>
<rect x="813" y="622" width="5" height="3" fill="#00bfff"/>
<rect x="823" y="619" width="1" height="35" fill="#00bfff"/>
<rect x="821" y="624" width="5" height="25" fill="#00bfff"/>
<rect x="831" y="640" width="1" height="51" fill="#00bfff"/>
<rect x="829" y="648" width="5" height="38" fill="#00bfff"/>
<rect x="839" y="651" width="1" height="37" fill="#ff0000"/>
<rect x="837" y="651" width="5" height="36" fill="#ff0000"/>
<rect x="847" y="645" width="1" height="10" fill="#ff0000"/>
<rect x="845" y="651" width="5" height="1" fill="#ff0000"/>
<rect x="855" y="650" width="1" height="22" fill="#00bfff"/>
<rect x="853" y="650" width="5" height="6" fill="#00bfff"/>
<rect x="863" y="652" width="1" height="13" fill="#00bfff"/>
<rect x="861" y="655" width="5" height="6" fill="#00bfff"/>
<rect x="871" y="642" width="1" height="24" fill="#ff0000"/>
<rect x="869" y="644" width="5" height="17" fill="#ff0000"/>
<rect x="879" y="621" width="1" height="29" fill="#ff0000"/>
<rect x="877" y="635" width="5" height="10" fill="#ff0000"/>
<rect x="887" y="628" width="1" height="21" fill="#ff0000"/>
<rect x="885" y="634" width="5" height="2" fill="#ff0000"/>
<rect x="895" y="625" width="1" height="19" fill="#ff0000"/>
<rect x="893" y="626" width="5" height="9" fill="#ff0000"/>
<rect x="903" y="618" width="1" height="14" fill="#ff0000"/>
<rect x="901" y="619" width="5" height="8" fill="#ff0000"/>
<rect x="911" y="613" width="1" height="9" fill="#ff0000"/>
<rect x="909" y="617" width="5" height="3" fill="#ff0000"/>
<rect x="919" y="614" width="1" height="22" fill="#00bfff"/>
<rect x="917" y="617" width="5" height="14" fill="#00bfff"/>
<rect x="927" y="621" width="1" height="16" fill="#00bfff"/>
<rect x="925" y="629" width="5" height="4" fill="#00bfff"/>
<rect x="935" y="629" width="1" height="25" fill="#00bfff"/>
<rect x="933" y="632" width="5" height="12" fill="#00bfff"/>
<rect x="943" y="626" width="1" height="25" fill="#ff0000"/>
<rect x="941" y="627" width="5" height="17" fill="#ff0000"/>
<rect x="951" y="615" width="1" height="17" fill="#00bfff"/>
<rect x="949" y="627" width="5" height="3" fill="#00bfff"/>
<rect x="959" y="613" width="1" height="19" fill="#ff0000"/>
<rect x="957" y="623" width="5" height="7" fill="#ff0000"/>
<rect x="967" y="613" width="1" height="19" fill="#ff0000"/>
<rect x="965" y="616" width="5" height="8" fill="#ff0000"/>
<rect x="975" y="606" width="1" height="18" fill="#ff0000"/>
<rect x="973" y="611" width="5" height="6" fill="#ff0000"/>
<rect x="983" y="597" width="1" height="19" fill="#00bfff"/>
<rect x="981" y="611" width="5" height="2" fill="#00bfff"/>
<rect x="991" y="611" width="1" height="27" fill="#00bfff"/>
<rect x="989" y="612" width="5" height="9" fill="#00bfff"/>
<rect x="999" y="602" width="1" height="28" fill="#ff0000"/>
<rect x="997" y="602" width="5" height="19" fill="#ff0000"/>
<rect x="1007" y="597" width="1" height="17" fill="#ff0000"/>
<rect x="1005" y="600" width="5" height="3" fill="#ff0000"/>
<rect x="1015" y="573" width="1" height="28" fill="#ff0000"/>
<rect x="1013" y="585" width="5" height="16" fill="#ff0000"/>
<rect x="1023" y="575" width="1" height="33" fill="#00bfff"/>
<rect x="1021" y="585" width="5" height="11" fill="#00bfff"/>
<rect x="1031" y="592" width="1" height="16" fill="#ff0000"/>
<rect x="1029" y="593" width="5" height="3" fill="#ff0000"/>
<rect x="1039" y="588" width="1" height="69" fill="#00bfff"/>
<rect x="1037" y="593" width="5" height="30" fill="#00bfff"/>
<rect x="1047" y="622" width="1" height="15" fill="#00bfff"/>
<rect x="1045" y="624" width="5" height="6" fill="#00bfff"/>
<rect x="1055" y="617" width="1" height="17" fill="#ff0000"/>
<rect x="1053" y="624" width="5" height="6" fill="#ff0000"/>
<rect x="1063" y="616" width="1" height="14" fill="#ff0000"/>
<rect x="1061" y="622" width="5" height="3" fill="#ff0000"/>
<rect x="1071" y="609" width="1" height="28" fill="#00bfff"/>
<rect x="1069" y="622" width="5" height="7" fill="#00bfff"/>
<rect x="1079" y="619" width="1" height="14" fill="#ff0000"/>
<rect x="1077" y="621" width="5" height="8" fill="#ff0000"/>
<rect x="1087" y="610" width="1" height="15" fill="#ff0000"/>
<rect x="1085" y="614" width="5" height="8" fill="#ff0000"/>
<rect x="1095" y="609" width="1" height="9" fill="#00bfff"/>
<rect x="1093" y="611" width="5" height="1" fill="#00bfff"/>
<rect x="1103" y="599" width="1" height="15" fill="#ff0000"/>
<rect x="1101" y="604" width="5" height="9" fill="#ff0000"/>
<rect x="1111" y="591" width="1" height="14" fill="#ff0000"/>
<rect x="1109" y="593" width="5" height="12" fill="#ff0000"/>
<rect x="1119" y="588" width="1" height="10" fill="#ff0000"/>
<rect x="1117" y="592" width="5" height="2" fill="#ff0000"/>
<rect x="1127" y="577" width="1" height="17" fill="#ff0000"/>
<rect x="1125" y="578" width="5" height="15" fill="#ff0000"/>
<rect x="1135" y="572" width="1" height="49" fill="#00bfff"/>
<rect x="1133" y="579" width="5" height="37" fill="#00bfff"/>
<rect x="1143" y="596" width="1" height="25" fill="#ff0000"/>
<rect x="1141" y="603" width="5" height="13" fill="#ff0000"/>
<rect x="1151" y="595" width="1" height="13" fill="#ff0000"/>
<rect x="1149" y="603" width="5" height="1" fill="#ff0000"/>
<rect x="1159" y="597" width="1" height="14" fill="#00bfff"/>
<rect x="1157" y="603" width="5" height="4" fill="#00bfff"/>
<rect x="1167" y="583" width="1" height="34" fill="#ff0000"/>
<rect x="1165" y="590" width="5" height="17" fill="#ff0000"/>
<rect x="1175" y="572" width="1" height="27" fill="#ff0000"/>
<rect x="1173" y="577" width="5" height="14" fill="#ff0000"/>
<rect x="1183" y="573" width="1" height="20" fill="#00bfff"/>
<rect x="1181" y="577" width="5" height="11" fill="#00bfff"/>
<rect x="1191" y="567" width="1" height="23" fill="#ff0000"/>
<rect x="1189" y="571" width="5" height="17" fill="#ff0000"/>
<rect x="1199" y="562" width="1" height="20" fill="#ff0000"/>
<rect x="1197" y="567" width="5" height="4" fill="#ff0000"/>
<rect x="1207" y="563" width="1" height="11" fill="#ff0000"/>
<rect x="1205" y="566" width="5" height="1" fill="#ff0000"/>
<rect x="1215" y="547" width="1" height="21" fill="#ff0000"/>
<rect x="1213" y="550" width="5" height="17" fill="#ff0000"/>
<rect x="1223" y="542" width="1" height="9" fill="#ff0000"/>
<rect x="1221" y="545" width="5" height="6" fill="#ff0000"/>
<rect x="1231" y="542" width="1" height="6" fill="#ff0000"/>
<rect x="1229" y="544" width="5" height="2" fill="#ff0000"/>
<rect x="1239" y="546" width="1" height="15" fill="#00bfff"/>
<rect x="1237" y="546" width="5" height="12" fill="#00bfff"/>
<rect x="1247" y="547" width="1" height="11" fill="#ff0000"/>
<rect x="1245" y="551" width="5" height="7" fill="#ff0000"/>
<rect x="1255" y="548" width="1" height="7" fill="#00bfff"/>
<rect x="1253" y="550" width="5" height="2" fill="#00bfff"/>
<rect x="1263" y="541" width="1" height="18" fill="#ff0000"/>
<rect x="1261" y="544" width="5" height="10" fill="#ff0000"/>
<rect x="1271" y="540" width="1" height="14" fill="#ff0000"/>
<rect x="1269" y="544" width="5" height="1" fill="#ff0000"/>
<rect x="1279" y="538" width="1" height="11" fill="#ff0000"/>
<rect x="1277" y="539" width="5" height="4" fill="#ff0000"/>
<rect x="1287" y="539" width="1" height="13" fill="#00bfff"/>
<rect x="1285" y="539" width="5" height="8" fill="#00bfff"/>
<rect x="1295" y="545" width="1" height="11" fill="#00bfff"/>
<rect x="1293" y="547" width="5" height="1" fill="#00bfff"/>
<rect x="1303" y="543" width="1" height="12" fill="#ff0000"/>
<rect x="1301" y="543" width="5" height="6" fill="#ff0000"/>
<rect x="1311" y="541" width="1" height="23" fill="#00bfff"/>
<rect x="1309" y="542" width="5" height="18" fill="#00bfff"/>
<rect x="1319" y="541" width="1" height="22" fill="#ff0000"/>
<rect x="1317" y="542" width="5" height="19" fill="#ff0000"/>
<rect x="1327" y="537" width="1" height="12" fill="#00bfff"/>
<rect x="1325" y="542" width="5" height="4" fill="#00bfff"/>
<rect x="1335" y="540" width="1" height="9" fill="#ff0000"/>
<rect x="1333" y="543" width="5" height="3" fill="#ff0000"/>
<rect x="1343" y="537" width="1" height="13" fill="#00bfff"/>
<rect x="1341" y="542" width="5" height="2" fill="#00bfff"/>
<rect x="1351" y="525" width="1" height="21" fill="#ff0000"/>
<rect x="1349" y="526" width="5" height="18" fill="#ff0000"/>
<rect x="1359" y="523" width="1" height="14" fill="#00bfff"/>
<rect x="1357" y="526" width="5" height="3" fill="#00bfff"/>
<rect x="1367" y="525" width="1" height="21" fill="#00bfff"/>
<rect x="1365" y="528" width="5" height="12" fill="#00bfff"/>
<rect x="1375" y="531" width="1" height="18" fill="#ff0000"/>
<rect x="1373" y="537" width="5" height="3" fill="#ff0000"/>
<rect x="1383" y="522" width="1" height="17" fill="#ff0000"/>
<rect x="1381" y="526" width="5" height="11" fill="#ff0000"/>
<rect x="1391" y="521" width="1" height="7" fill="#ff0000"/>
<rect x="1389" y="525" width="5" height="2" fill="#ff0000"/>
<rect x="1399" y="515" width="1" height="14" fill="#ff0000"/>
<rect x="1397" y="515" width="5" height="11" fill="#ff0000"/>
<rect x="1407" y="511" width="1" height="10" fill="#00bfff"/>
<rect x="1405" y="515" width="5" height="3" fill="#00bfff"/>
<rect x="1415" y="509" width="1" height="10" fill="#ff0000"/>
<rect x="1413" y="510" width="5" height="8" fill="#ff0000"/>
<rect x="1423" y="506" width="1" height="54" fill="#00bfff"/>
<rect x="1421" y="509" width="5" height="10" fill="#00bfff"/>
<rect x="1431" y="512" width="1" height="22" fill="#00bfff"/>
<rect x="1429" y="512" width="5" height="15" fill="#00bfff"/>
<rect x="1439" y="516" width="1" height="14" fill="#ff0000"/>
<rect x="1437" y="526" width="5" height="1" fill="#ff0000"/>
<rect x="1447" y="518" width="1" height="9" fill="#ff0000"/>
<rect x="1445" y="519" width="5" height="7" fill="#ff0000"/>
<rect x="1455" y="515" width="1" height="14" fill="#00bfff"/>
<rect x="1453" y="519" width="5" height="2" fill="#00bfff"/>
</g>
<path d="M0,570h4v1h-4zM4,571h5v1h-5zM9,572h5v1h-5zM14,573h3v1h-3zM17,574h4v1h-4zM21,575h20v1h-20zM41,576h28v1h-28zM69,577h4v1h-4zM73,578h5v1h-5zM78,579h4v1h-4zM82,580h4v1h-4zM86,581h4v1h-4zM90,582h5v1h-5zM95,583h3v1h-3zM98,584h5v1h-5zM103,585h3v1h-3zM106,586h5v1h-5zM111,587h5v1h-5zM116,588h4v1h-4zM120,589h5v1h-5zM125,590h4v1h-4zM129,591h5v1h-5zM134,592h4v1h-4zM138,593h5v1h-5zM143,594h4v1h-4zM147,595h5v1h-5zM152,596h4v1h-4zM156,597h4v1h-4zM160,598h5v1h-5zM165,599h19v1h-19zM184,600h17v1h-17zM201,599h2v1h-2zM203,598h3v1h-3zM206,597h3v1h-3zM209,596h2v1h-2zM211,595h3v1h-3zM214,594h5v1h-5zM219,593h3v1h-3zM222,592h5v1h-5zM227,591h3v1h-3zM230,590h4v1h-4zM234,589h3v1h-3zM237,588h4v1h-4zM241,587h3v1h-3zM244,586h3v1h-3zM247,585h2v1h-2zM249,584h3v1h-3zM252,583h1v1h-1zM253,582h3v1h-3zM256,581h1v1h-1zM257,580h3v1h-3zM260,579h1v1h-1zM261,578h3v1h-3zM264,577h1v1h-1zM265,576h3v1h-3zM268,575h1v1h-1zM269,574h3v1h-3zM272,573h1v1h-1zM273,572h3v1h-3zM276,571h1v1h-1zM277,570h3v1h-3zM280,569h1v1h-1zM281,568h3v1h-3zM284,567h1v1h-1zM285,566h3v1h-3zM288,565h1v1h-1zM289,564h2v1h-2zM291,563h2v1h-2zM293,562h1v1h-1zM294,561h2v1h-2zM296,560h2v1h-2zM298,559h1v1h-1zM299,558h2v1h-2zM301,557h2v1h-2zM303,556h1v1h-1zM304,555h2v1h-2zM306,554h2v1h-2zM308,553h1v1h-1zM309,552h2v1h-2zM311,551h2v1h-2zM313,550h2v1h-2zM315,549h2v1h-2zM317,548h2v1h-2zM319,547h1v1h-1zM320,546h2v1h-2zM322,545h2v1h-2zM324,544h2v1h-2zM326,543h2v1h-2zM328,542h2v1h-2zM330,541h2v1h-2zM332,540h2v1h-2zM334,539h2v1h-2zM336,538h2v1h-2zM338,537h2v1h-2zM340,536h2v1h-2zM342,535h2v1h-2zM344,534h2v1h-2zM346,533h2v1h-2zM348,532h3v1h-3zM351,531h2v1h-2zM353,530h7v1h-7zM360,529h1v1h-1zM361,530h8v1h-8zM369,531h5v1h-5zM374,532h5v1h-5zM379,533h3v1h-3zM382,534h3v1h-3zM385,535h3v1h-3zM388,536h3v1h-3zM391,537h4v1h-4zM395,538h3v1h-3zM398,539h3v1h-3zM401,540h1v1h-1zM402,541h1v1h-1zM403,542h1v1h-1zM404,543h2v1h-2zM406,544h1v1h-1zM407,545h1v1h-1zM408,546h1v1h-1zM409,547h2v1h-2zM411,548h1v1h-1zM412,549h1v1h-1zM413,550h1v1h-1zM414,551h1v1h-1zM415,552h1v1h-1zM416,553h1v1h-1zM417,554h1v1h-1zM418,555h1v1h-1zM419,556h1v1h-1zM420,557h1v1h-1zM421,558h1v1h-1zM422,559h1v1h-1zM423,560h1v1h-1zM424,561h1v1h-1zM425,562h1v1h-1zM426,563h1v1h-1zM427,564h1v1h-1zM428,565h1v1h-1zM429,566h1v1h-1zM430,567h1v1h-1zM431,568h1v2h-1zM432,570h1v1h-1zM433,571h1v1h-1zM434,572h1v1h-1zM435,573h1v1h-1zM436,574h1v1h-1zM437,575h1v1h-1zM438,576h1v1h-1zM439,577h1v1h-1zM440,578h1v2h-1zM441,580h1v1h-1zM442,581h1v1h-1zM443,582h1v1h-1zM444,583h1v1h-1zM445,584h1v2h-1zM446,586h1v1h-1zM447,587h1v1h-1zM448,588h1v2h-1zM449,590h1v1h-1zM450,591h1v1h-1zM451,592h1v2h-1zM452,594h1v1h-1zM453,595h1v1h-1zM454,596h1v1h-1zM455,597h1v2h-1zM456,599h1v1h-1zM457,600h1v1h-1zM458,601h1v2h-1zM459,603h1v1h-1zM460,604h1v1h-1zM461,605h1v1h-1zM462,606h1v2h-1zM463,608h1v1h-1zM464,609h1v1h-1zM465,610h1v2h-1zM466,612h1v1h-1zM467,613h1v1h-1zM468,614h1v1h-1zM469,615h1v1h-1zM470,616h1v2h-1zM471,618h1v1h-1zM472,619h1v1h-1zM473,620h1v2h-1zM474,622h1v1h-1zM475,623h1v1h-1zM476,624h1v1h-1zM477,625h1v1h-1zM478,626h1v1h-1zM479,627h1v1h-1zM480,628h1v2h-1zM481,630h1v1h-1zM482,631h1v1h-1zM483,632h1v1h-1zM484,633h1v1h-1zM485,634h1v1h-1zM486,635h1v1h-1zM487,636h1v2h-1zM488,638h1v1h-1zM489,639h1v1h-1zM490,640h1v1h-1zM491,641h1v1h-1zM492,642h1v1h-1zM493,643h1v1h-1zM494,644h1v1h-1zM495,645h1v1h-1zM496,646h1v1h-1zM497,647h1v1h-1zM498,648h1v1h-1zM499,649h1v1h-1zM500,650h1v1h-1zM501,651h1v1h-1zM502,652h1v1h-1zM503,653h1v1h-1zM504,654h1v1h-1zM505,655h1v1h-1zM506,656h1v1h-1zM507,657h1v1h-1zM508,658h1v1h-1zM509,659h2v1h-2zM511,660h1v1h-1zM512,661h2v1h-2zM514,662h1v1h-1zM515,663h2v1h-2zM517,664h1v1h-1zM518,665h2v1h-2zM520,666h2v1h-2zM522,667h1v1h-1zM523,668h3v1h-3zM526,669h1v1h-1zM527,670h3v1h-3zM530,671h1v1h-1zM531,672h3v1h-3zM534,673h1v1h-1zM535,674h3v1h-3zM538,675h1v1h-1zM539,676h3v1h-3zM542,677h2v1h-2zM544,678h2v1h-2zM546,679h2v1h-2zM548,680h3v1h-3zM551,681h2v1h-2zM553,682h2v1h-2zM555,683h2v1h-2zM557,684h4v1h-4zM561,683h2v1h-2zM563,682h2v1h-2zM565,681h4v1h-4zM569,680h5v1h-5zM574,679h4v1h-4zM578,678h4v1h-4zM582,677h3v1h-3zM585,676h2v1h-2zM587,675h3v1h-3zM590,674h3v1h-3zM593,673h1v1h-1zM594,672h1v1h-1zM595,671h1v1h-1zM596,670h2v1h-2zM598,669h1v1h-1zM599,668h1v1h-1zM600,667h1v1h-1zM601,666h2v1h-2zM603,665h1v1h-1zM604,664h1v1h-1zM605,663h1v1h-1zM606,662h1v1h-1zM607,661h1v1h-1zM608,660h1v1h-1zM609,659h1v1h-1zM610,658h1v1h-1zM611,657h1v1h-1zM612,656h1v1h-1zM613,655h1v1h-1zM614,654h1v1h-1zM615,653h1v1h-1zM616,652h1v1h-1zM617,651h1v1h-1zM618,650h1v1h-1zM619,649h1v1h-1zM620,648h2v1h-2zM622,647h1v1h-1zM623,646h1v1h-1zM624,645h1v1h-1zM625,644h1v1h-1zM626,643h1v1h-1zM627,642h1v1h-1zM628,641h1v1h-1zM629,640h1v1h-1zM630,639h1v1h-1zM631,638h1v1h-1zM632,637h1v1h-1zM633,636h1v1h-1zM634,635h1v1h-1zM635,634h2v1h-2zM637,633h1v1h-1zM638,632h1v1h-1zM639,631h1v1h-1zM640,630h1v1h-1zM641,629h1v1h-1zM642,628h1v1h-1zM643,627h1v1h-1zM644,626h1v1h-1zM645,625h1v1h-1zM646,624h1v1h-1zM647,623h1v1h-1zM648,622h2v1h-2zM650,621h1v1h-1zM651,620h1v1h-1zM652,619h1v1h-1zM653,618h1v1h-1zM654,617h1v1h-1zM655,616h2v1h-2zM657,615h1v1h-1zM658,614h1v1h-1zM659,613h1v1h-1zM660,612h1v1h-1zM661,611h2v1h-2zM663,610h2v1h-2zM665,609h1v1h-1zM666,608h2v1h-2zM668,607h2v1h-2zM670,606h2v1h-2zM672,605h2v1h-2zM674,604h2v1h-2zM676,603h2v1h-2zM678,602h2v1h-2zM680,601h2v1h-2zM682,600h1v1h-1zM683,599h1v1h-1zM684,598h1v1h-1zM685,597h2v1h-2zM687,596h1v1h-1zM688,595h1v1h-1zM689,594h2v1h-2zM691,593h1v1h-1zM692,592h1v1h-1zM693,591h2v1h-2zM695,590h1v1h-1zM696,589h2v1h-2zM698,588h1v1h-1zM699,587h1v1h-1zM700,586h2v1h-2zM702,585h1v1h-1zM703,584h2v1h-2zM705,583h1v1h-1zM706,582h2v1h-2zM708,581h1v1h-1zM709,580h2v1h-2zM711,579h2v1h-2zM713,578h1v1h-1zM714,577h2v1h-2zM716,576h2v1h-2zM718,575h2v1h-2zM720,574h1v1h-1zM721,573h2v1h-2zM723,572h2v1h-2zM725,571h2v1h-2zM727,570h2v1h-2zM729,569h2v1h-2zM731,568h2v1h-2zM733,567h2v1h-2zM735,566h2v1h-2zM737,565h2v1h-2zM739,564h2v1h-2zM741,563h2v1h-2zM743,562h2v1h-2zM745,561h2v1h-2zM747,560h2v1h-2zM749,559h2v1h-2zM751,558h2v1h-2zM753,557h2v1h-2zM755,556h2v1h-2zM757,555h2v1h-2zM759,554h2v1h-2zM761,553h7v1h-7zM768,552h1v1h-1zM769,553h3v1h-3zM772,554h4v1h-4zM776,555h3v1h-3zM779,556h3v1h-3zM782,557h1v1h-1zM783,558h3v1h-3zM786,559h1v1h-1zM787,560h3v1h-3zM790,561h1v1h-1zM791,562h3v1h-3zM794,563h1v1h-1zM795,564h3v1h-3zM798,565h1v1h-1zM799,566h3v1h-3zM802,567h2v1h-2zM804,568h3v1h-3zM807,569h2v1h-2zM809,570h3v1h-3zM812,571h2v1h-2zM814,572h3v1h-3zM817,573h2v1h-2zM819,574h2v1h-2zM821,575h2v1h-2zM823,576h2v1h-2zM825,577h1v1h-1zM826,578h2v1h-2zM828,579h2v1h-2zM830,580h1v1h-1zM831,581h2v1h-2zM833,582h2v1h-2zM835,583h1v1h-1zM836,584h2v1h-2zM838,585h2v1h-2zM840,586h1v1h-1zM841,587h2v1h-2zM843,588h1v1h-1zM844,589h1v1h-1zM845,590h2v1h-2zM847,591h1v1h-1zM848,592h2v1h-2zM850,593h1v1h-1zM851,594h2v1h-2zM853,595h1v1h-1zM854,596h2v1h-2zM856,597h1v1h-1zM857,598h1v1h-1zM858,599h2v1h-2zM860,600h1v1h-1zM861,601h2v1h-2zM863,602h1v1h-1zM864,603h1v1h-1zM865,604h2v1h-2zM867,605h1v1h-1zM868,606h2v1h-2zM870,607h1v1h-1zM871,608h2v1h-2zM873,609h1v1h-1zM874,610h2v1h-2zM876,611h1v1h-1zM877,612h1v1h-1zM878,613h2v1h-2zM880,614h2v1h-2zM882,615h1v1h-1zM883,616h3v1h-3zM886,617h1v1h-1zM887,618h3v1h-3zM890,619h1v1h-1zM891,620h3v1h-3zM894,621h1v1h-1zM895,622h3v1h-3zM898,623h1v1h-1zM899,624h3v1h-3zM902,625h1v1h-1zM903,626h3v1h-3zM906,627h1v1h-1zM907,628h3v1h-3zM910,629h1v1h-1zM911,630h3v1h-3zM914,631h1v1h-1zM915,632h3v1h-3zM918,633h1v1h-1zM919,634h2v1h-2zM921,635h2v1h-2zM923,636h2v1h-2zM925,637h2v1h-2zM927,638h2v1h-2zM929,639h1v1h-1zM930,640h2v1h-2zM932,641h12v1h-12zM944,640h4v1h-4zM948,639h18v1h-18zM966,638h8v1h-8zM974,637h5v1h-5zM979,636h6v1h-6zM985,635h3v1h-3zM988,634h3v1h-3zM991,633h2v1h-2zM993,632h3v1h-3zM996,631h3v1h-3zM999,630h3v1h-3zM1002,629h2v1h-2zM1004,628h3v1h-3zM1007,627h3v1h-3zM1010,626h3v1h-3zM1013,625h2v1h-2zM1015,624h3v1h-3zM1018,623h2v1h-2zM1020,622h3v1h-3zM1023,621h2v1h-2zM1025,620h2v1h-2zM1027,619h3v1h-3zM1030,618h2v1h-2zM1032,617h23v1h-23zM1055,616h3v1h-3zM1058,617h7v1h-7zM1065,618h17v1h-17zM1082,617h5v1h-5zM1087,616h4v1h-4zM1091,615h5v1h-5zM1096,614h5v1h-5zM1101,613h5v1h-5zM1106,612h6v1h-6zM1112,611h5v1h-5zM1117,610h6v1h-6zM1123,609h5v1h-5zM1128,608h25v1h-25zM1153,607h20v1h-20zM1173,606h16v1h-16zM1189,605h4v1h-4zM1193,604h4v1h-4zM1197,603h2v1h-2zM1199,602h2v1h-2zM1201,601h2v1h-2zM1203,600h2v1h-2zM1205,599h2v1h-2zM1207,598h2v1h-2zM1209,597h2v1h-2zM1211,596h3v1h-3zM1214,595h2v1h-2zM1216,594h2v1h-2zM1218,593h2v1h-2zM1220,592h3v1h-3zM1223,591h2v1h-2zM1225,590h2v1h-2zM1227,589h2v1h-2zM1229,588h2v1h-2zM1231,587h3v1h-3zM1234,586h3v1h-3zM1237,585h3v1h-3zM1240,584h3v1h-3zM1243,583h2v1h-2zM1245,582h3v1h-3zM1248,581h3v1h-3zM1251,580h3v1h-3zM1254,579h2v1h-2zM1256,578h2v1h-2zM1258,577h3v1h-3zM1261,576h2v1h-2zM1263,575h3v1h-3zM1266,574h2v1h-2zM1268,573h2v1h-2zM1270,572h3v1h-3zM1273,571h3v1h-3zM1276,570h3v1h-3zM1279,569h3v1h-3zM1282,568h3v1h-3zM1285,567h3v1h-3zM1288,566h3v1h-3zM1291,565h3v1h-3zM1294,564h4v1h-4zM1298,563h3v1h-3zM1301,562h4v1h-4zM1305,561h3v1h-3zM1308,560h4v1h-4zM1312,559h3v1h-3zM1315,558h4v1h-4zM1319,557h3v1h-3zM1322,556h4v1h-4zM1326,555h3v1h-3zM1329,554h3v1h-3zM1332,553h3v1h-3zM1335,552h4v1h-4zM1339,551h3v1h-3zM1342,550h5v1h-5zM1347,549h3v1h-3zM1350,548h5v1h-5zM1355,547h3v1h-3zM1358,546h4v1h-4zM1362,545h4v1h-4zM1366,544h14v1h-14zM1380,543h5v1h-5zM1385,542h5v1h-5zM1390,541h5v1h-5zM1395,540h5v1h-5zM1400,539h4v1h-4zM1404,538h4v1h-4zM1408,537h5v1h-5zM1413,536h4v1h-4zM1417,535h4v1h-4zM1421,534h17v1h-17zM1438,533h5v1h-5zM1443,532h6v1h-6zM1449,531h5v1h-5zM1454,530h2v1h-2z" fill="#ff0000"/>
<rect x="0" y="133" width="1844" height="1" fill="#ffa500"/>
<rect x="0" y="200" width="1844" height="1" fill="#0000ff"/>
<rect x="0" y="219" width="1844" height="1" fill="#ffff00"/>
<rect x="0" y="527" width="1844" height="1" fill="#3cb371"/>
<rect x="0" y="571" width="1844" height="1" fill="#ffa500"/>
<rect x="0" y="691" width="1844" height="1" fill="#0000ff"/>
<rect x="0" y="725" width="1844" height="1" fill="#ffff00"/>
<g shape-rendering="auto">
<path d="M1278.0,115.6 L1284.2,128.4 Q1286.0,132.0 1286.8,135.9 L1289.2,148.1 Q1290.0,152.0 1290.7,155.9 L1293.3,170.1 Q1294.0,174.0 1294.8,177.9 L1296.2,184.1 Q1297.0,188.0 1299.1,184.6 L1299.9,183.4 Q1302.0,180.0 1304.2,176.6 L1323.8,146.4 Q1326.0,143.0 1328.9,145.7 L1349.1,164.3 Q1352.0,167.0 1354.2,163.7 L1371.8,137.3 Q1374.0,134.0 1376.6,130.9 L1393.4,110.7 Q1396.0,107.6 1398.9,110.3 L1417.1,127.3 Q1420.0,130.0 1422.7,127.0 L1446.0,101.0" fill="none" stroke="#ffff00" stroke-width="2.7" stroke-linecap="round" stroke-linejoin="round"/>
<path d="M1079.0,621.0 L1083.7,615.6 Q1086.0,613.0 1088.6,610.6 L1097.4,602.4 Q1100.0,600.0 1102.6,597.7 L1116.4,585.9 Q1119.0,583.6 1121.0,586.5 L1124.0,591.1 Q1126.0,594.0 1128.5,596.5 L1137.5,605.5 Q1140.0,608.0 1143.0,609.8 L1154.0,616.2 Q1157.0,618.0 1159.5,615.5 L1161.5,613.5 Q1164.0,611.0 1164.9,607.6 L1169.1,591.4 Q1170.0,588.0 1171.2,584.7 L1174.8,575.3 Q1176.0,572.0 1178.0,570.5 L1178.0,570.5 Q1180.0,569.0 1182.7,571.2 L1183.3,571.8 Q1186.0,574.0 1188.6,576.3 L1193.4,580.7 Q1196.0,583.0 1198.0,583.0 L1198.0,583.0 Q1200.0,583.0 1202.8,580.9 L1217.2,570.1 Q1220.0,568.0 1222.3,565.4 L1235.7,550.6 Q1238.0,548.0 1240.8,545.9 L1241.2,545.7 Q1244.0,543.6 1246.8,545.7 L1247.2,545.9 Q1250.0,548.0 1252.7,550.2 L1255.3,552.2 Q1258.0,554.4 1261.0,554.2 L1261.0,554.2 Q1264.0,554.0 1266.9,552.1 L1285.1,539.9 Q1288.0,538.0 1291.0,538.0 L1291.0,538.0 Q1294.0,538.0 1296.5,540.5 L1299.5,543.5 Q1302.0,546.0 1304.5,548.5 L1311.5,555.5 Q1314.0,558.0 1317.0,558.0 L1317.0,558.0 Q1320.0,558.0 1322.3,555.4 L1335.7,540.6 Q1338.0,538.0 1340.4,535.5 L1351.6,523.5 Q1354.0,521.0 1357.0,521.0 L1357.0,521.0 Q1360.0,521.0 1362.6,523.3 L1365.4,525.7 Q1368.0,528.0 1369.9,530.9 L1372.1,534.1 Q1374.0,537.0 1376.0,537.5 L1376.0,537.5 Q1378.0,538.0 1381.1,536.4 L1384.9,534.6 Q1388.0,533.0 1390.8,530.9 L1397.2,526.1 Q1400.0,524.0 1402.3,521.4 L1411.2,511.6 Q1413.5,509.0 1417.0,509.0 L1417.5,509.0 Q1421.0,509.0 1423.6,511.4 L1436.0,523.0" fill="none" stroke="#ffff00" stroke-width="2.7" stroke-linecap="round" stroke-linejoin="round"/>
<circle cx="1132.5" cy="577.5" r="0.9" fill="#ffff00"/>
</g>
<rect x="0" y="386" width="1845" height="1" fill="#ffffff"/>
<rect x="1844" y="0" width="1" height="387" fill="#ffffff"/>
<rect x="1843" y="17" width="3" height="72" fill="#ffffff"/>
<rect x="0" y="410" width="1903" height="2" fill="#ffffff"/>
<rect x="0" y="415" width="1903" height="2" fill="#a0a0a0"/>
<rect x="1836" y="412" width="1" height="3" fill="#ffffff"/>
<rect x="1901" y="412" width="1" height="3" fill="#ffffff"/>
<rect x="0" y="419" width="1845" height="1" fill="#ffffff"/>
<rect x="1844" y="419" width="1" height="388" fill="#ffffff"/>
<rect x="1843" y="457" width="3" height="60" fill="#ffffff"/>
<rect x="0" y="806" width="1845" height="1" fill="#ffffff"/>
<rect x="95" y="386" width="1" height="4" fill="#ffffff"/>
<rect x="95" y="806" width="1" height="4" fill="#ffffff"/>
<rect x="191" y="386" width="1" height="4" fill="#ffffff"/>
<rect x="191" y="806" width="1" height="4" fill="#ffffff"/>
<rect x="287" y="386" width="1" height="4" fill="#ffffff"/>
<rect x="287" y="806" width="1" height="4" fill="#ffffff"/>
<rect x="383" y="386" width="1" height="4" fill="#ffffff"/>
<rect x="383" y="806" width="1" height="4" fill="#ffffff"/>
<rect x="479" y="386" width="1" height="4" fill="#ffffff"/>
<rect x="479" y="806" width="1" height="4" fill="#ffffff"/>
<rect x="575" y="386" width="1" height="4" fill="#ffffff"/>
<rect x="575" y="806" width="1" height="4" fill="#ffffff"/>
<rect x="671" y="386" width="1" height="4" fill="#ffffff"/>
<rect x="671" y="806" width="1" height="4" fill="#ffffff"/>
<rect x="767" y="386" width="1" height="4" fill="#ffffff"/>
<rect x="767" y="806" width="1" height="4" fill="#ffffff"/>
<rect x="863" y="386" width="1" height="4" fill="#ffffff"/>
<rect x="863" y="806" width="1" height="4" fill="#ffffff"/>
<rect x="959" y="386" width="1" height="4" fill="#ffffff"/>
<rect x="959" y="806" width="1" height="4" fill="#ffffff"/>
<rect x="1055" y="386" width="1" height="4" fill="#ffffff"/>
<rect x="1055" y="806" width="1" height="4" fill="#ffffff"/>
<rect x="1151" y="386" width="1" height="4" fill="#ffffff"/>
<rect x="1151" y="806" width="1" height="4" fill="#ffffff"/>
<rect x="1247" y="386" width="1" height="4" fill="#ffffff"/>
<rect x="1247" y="806" width="1" height="4" fill="#ffffff"/>
<rect x="1343" y="386" width="1" height="4" fill="#ffffff"/>
<rect x="1343" y="806" width="1" height="4" fill="#ffffff"/>
<rect x="1439" y="386" width="1" height="4" fill="#ffffff"/>
<rect x="1439" y="806" width="1" height="4" fill="#ffffff"/>
<rect x="1845" y="24" width="3" height="1" fill="#ffffff"/>
<rect x="1845" y="73" width="3" height="1" fill="#ffffff"/>
<rect x="1845" y="122" width="3" height="1" fill="#ffffff"/>
<rect x="1845" y="171" width="3" height="1" fill="#ffffff"/>
<rect x="1845" y="220" width="3" height="1" fill="#ffffff"/>
<rect x="1845" y="269" width="3" height="1" fill="#ffffff"/>
<rect x="1845" y="318" width="3" height="1" fill="#ffffff"/>
<rect x="1845" y="367" width="3" height="1" fill="#ffffff"/>
<rect x="1845" y="444" width="3" height="1" fill="#ffffff"/>
<rect x="1845" y="493" width="3" height="1" fill="#ffffff"/>
<rect x="1845" y="542" width="3" height="1" fill="#ffffff"/>
<rect x="1845" y="591" width="3" height="1" fill="#ffffff"/>
<rect x="1845" y="640" width="3" height="1" fill="#ffffff"/>
<rect x="1845" y="689" width="3" height="1" fill="#ffffff"/>
<rect x="1845" y="738" width="3" height="1" fill="#ffffff"/>
<rect x="1845" y="787" width="3" height="1" fill="#ffffff"/>
<polygon points="2,3 11,3 6.5,8" fill="#ffffff" shape-rendering="auto"/>
<polygon points="2,427 11,427 6.5,432" fill="#ffffff" shape-rendering="auto"/>
<rect x="-1" y="525" width="5" height="5" fill="#3cb371"/>
<rect x="0" y="526" width="3" height="3" fill="#ffffff"/>
<rect x="1839" y="525" width="5" height="5" fill="#3cb371"/>
<rect x="1840" y="526" width="3" height="3" fill="#ffffff"/>
</svg>
<div class="t" style="left:16.5px;top:-1px"><span class="sym">USDJPY.raw,H4</span></div><div class="t" style="left:111px;top:-1px">159.787</div><div class="t" style="left:161px;top:-1px">159.787</div><div class="t" style="left:211px;top:-1px">159.585</div><div class="t" style="left:261px;top:-1px">159.713</div>
<div class="t" style="left:16.5px;top:423px"><span class="sym">USDJPY.raw,H1</span></div><div class="t" style="left:111px;top:423px">159.724</div><div class="t" style="left:161px;top:423px">159.764</div><div class="t" style="left:211px;top:423px">159.634</div><div class="t" style="left:261px;top:423px">159.713</div>
<div class="t" style="letter-spacing:-0.04px;left:-2px;top:391px">12 Feb 2026</div>
<div class="t" style="letter-spacing:-0.04px;left:94px;top:391px">16 Feb 16:00</div>
<div class="t" style="letter-spacing:-0.04px;left:190px;top:391px">18 Feb 16:00</div>
<div class="t" style="letter-spacing:-0.04px;left:286px;top:391px">20 Feb 16:00</div>
<div class="t" style="letter-spacing:-0.04px;left:382px;top:391px">24 Feb 16:00</div>
<div class="t" style="letter-spacing:-0.04px;left:478px;top:391px">26 Feb 16:00</div>
<div class="t" style="letter-spacing:-0.12px;left:574px;top:391px">2 Mar 16:00</div>
<div class="t" style="letter-spacing:-0.12px;left:670px;top:391px">4 Mar 16:00</div>
<div class="t" style="letter-spacing:-0.12px;left:766px;top:391px">6 Mar 16:00</div>
<div class="t" style="letter-spacing:-0.12px;left:862px;top:391px">10 Mar 16:00</div>
<div class="t" style="letter-spacing:-0.12px;left:958px;top:391px">12 Mar 16:00</div>
<div class="t" style="letter-spacing:-0.12px;left:1054px;top:391px">16 Mar 16:00</div>
<div class="t" style="letter-spacing:-0.12px;left:1150px;top:391px">18 Mar 16:00</div>
<div class="t" style="letter-spacing:-0.12px;left:1246px;top:391px">20 Mar 16:00</div>
<div class="t" style="letter-spacing:-0.12px;left:1342px;top:391px">24 Mar 16:00</div>
<div class="t" style="letter-spacing:-0.12px;left:1438px;top:391px">26 Mar 16:00</div>
<div class="t" style="letter-spacing:-0.12px;left:-2px;top:811px">17 Mar 2026</div>
<div class="t" style="letter-spacing:-0.12px;left:94px;top:811px">18 Mar 01:00</div>
<div class="t" style="letter-spacing:-0.12px;left:190px;top:811px">18 Mar 13:00</div>
<div class="t" style="letter-spacing:-0.12px;left:286px;top:811px">19 Mar 01:00</div>
<div class="t" style="letter-spacing:-0.12px;left:382px;top:811px">19 Mar 13:00</div>
<div class="t" style="letter-spacing:-0.12px;left:478px;top:811px">20 Mar 01:00</div>
<div class="t" style="letter-spacing:-0.12px;left:574px;top:811px">20 Mar 13:00</div>
<div class="t" style="letter-spacing:-0.12px;left:670px;top:811px">23 Mar 01:00</div>
<div class="t" style="letter-spacing:-0.12px;left:766px;top:811px">23 Mar 13:00</div>
<div class="t" style="letter-spacing:-0.12px;left:862px;top:811px">24 Mar 01:00</div>
<div class="t" style="letter-spacing:-0.12px;left:958px;top:811px">24 Mar 13:00</div>
<div class="t" style="letter-spacing:-0.12px;left:1054px;top:811px">25 Mar 01:00</div>
<div class="t" style="letter-spacing:-0.12px;left:1150px;top:811px">25 Mar 13:00</div>
<div class="t" style="letter-spacing:-0.12px;left:1246px;top:811px">26 Mar 01:00</div>
<div class="t" style="letter-spacing:-0.12px;left:1342px;top:811px">26 Mar 13:00</div>
<div class="t" style="letter-spacing:-0.12px;left:1438px;top:811px">27 Mar 01:00</div>
<div class="pl" style="top:18px">161.137</div>
<div class="pl" style="top:67px">160.267</div>
<div class="pl" style="top:116px">159.397</div>
<div class="pl" style="top:165px">158.527</div>
<div class="pl" style="top:263px">156.802</div>
<div class="pl" style="top:312px">155.932</div>
<div class="pl" style="top:361px">155.062</div>
<div class="pl" style="top:438px">160.459</div>
<div class="pl" style="top:487px">159.974</div>
<div class="pl" style="top:536px">159.494</div>
<div class="pl" style="top:585px">159.009</div>
<div class="pl" style="top:634px">158.524</div>
<div class="pl" style="top:732px">157.559</div>
<div class="pl" style="top:781px">157.074</div>
<div class="bx" style="top:98px;background:#fff"><span>159.713</span></div>
<div class="bx" style="top:127px;background:#ffa500"><span>159.206</span></div>
<div class="bx" style="top:194px;background:#0000ff"><span>158.025</span></div>
<div class="bx" style="top:213px;background:#ffff00"><span>157.689</span></div>
<div class="bx" style="top:513px;background:#fff"><span>159.713</span></div>
<div class="bx" style="top:521px;background:#3cb371"><span>159.640</span></div>
<div class="bx" style="top:565px;background:#ffa500"><span>159.206</span></div>
<div class="bx" style="top:685px;background:#0000ff"><span>158.025</span></div>
<div class="bx" style="top:719px;background:#ffff00"><span>157.689</span></div>
<svg width="1903" height="830" viewBox="0 0 1903 830" style="position:absolute;left:0;top:0">
<!-- pen logo -->
<circle cx="1638" cy="81.3" r="21" fill="#000"/>
<path d="M1630.5,66.6 L1645.7,66.6 L1650.5,79.6 C1645,85 1642.8,91 1641.8,97.3 L1634.4,97.3 C1633.4,91 1631,85 1626,79.6 Z" fill="#fff"/>
<circle cx="1638.2" cy="78.9" r="4.3" fill="#000"/>
<rect x="1637.1" y="79" width="2.2" height="19" fill="#000"/>
<!-- toolbar body -->
<defs><filter id="sh" x="-30%" y="-5%" width="160%" height="110%"><feGaussianBlur stdDeviation="2.2"/></filter></defs>
<rect x="1616" y="111" width="45" height="532" fill="#000018" opacity="0.75" filter="url(#sh)"/>
<rect x="1617" y="111" width="42.7" height="530" fill="#fff"/>
<rect x="1619" y="114" width="38" height="37.2" fill="#35c0ed"/>
<rect x="1620" y="151.2" width="37" height="37.3" fill="#35c0ed"/>
<rect x="1619.5" y="151" width="37.5" height="0.8" fill="#5ccaee"/>
<g fill="#e3f3e3">
<rect x="1619.5" y="225.8" width="37.5" height="0.7"/><rect x="1619.5" y="301" width="37.5" height="0.7"/><rect x="1619.5" y="376.3" width="37.5" height="0.7"/><rect x="1619.5" y="451.5" width="37.5" height="0.7"/>
</g>
<!-- eye -->
<g stroke="#222" stroke-width="1.2" fill="#fff">
<path d="M1623.6,131.8 C1627.5,126 1632.5,123.2 1638,123.2 C1643.5,123.2 1648.5,126 1652.4,131.8 C1648.5,137.6 1643.5,140.4 1638,140.4 C1632.5,140.4 1627.5,137.6 1623.6,131.8 Z"/>
<circle cx="1638" cy="131.3" r="7.8"/>
</g>
<circle cx="1638" cy="131.3" r="5" fill="#222"/>
<!-- cursor -->
<path d="M1625.3,157.8 L1650.6,165.8 L1641.2,169 L1650.8,178.7 L1646.6,182.4 L1637,173.2 L1633.8,182.2 Z" fill="#fff" stroke="#222" stroke-width="1.2" stroke-linejoin="miter"/>
<!-- corner triangles -->
<g fill="#222">
<path d="M1657,188.5 L1657,180.5 L1649,188.5 Z"/>
<path d="M1657,226 L1657,218 L1649,226 Z"/>
<path d="M1657,263.7 L1657,255.7 L1649,263.7 Z"/>
<path d="M1657,301 L1657,293 L1649,301 Z"/>
<path d="M1657,488.5 L1657,480.5 L1649,488.5 Z"/>
</g>
<!-- stopwatch -->
<g stroke="#333" fill="none">
<circle cx="1638" cy="210.5" r="10.6" stroke-width="1.3"/>
<circle cx="1638" cy="210.5" r="8.3" stroke-width="0.9"/>
<rect x="1635" y="194.6" width="6.2" height="2.4" fill="#ddd" stroke-width="1"/>
<line x1="1638" y1="197" x2="1638" y2="199.5" stroke-width="1.6"/>
<line x1="1627.5" y1="199.5" x2="1630.5" y2="202" stroke-width="1.4"/>
<line x1="1638" y1="204.5" x2="1638.5" y2="211" stroke-width="1"/>
<line x1="1626.5" y1="219" x2="1650.5" y2="195.9" stroke="#fff" stroke-width="3.6"/>
<line x1="1625.6" y1="219.8" x2="1651.4" y2="195" stroke-width="1.6"/>
</g>
<!-- marker -->
<g stroke="#222" stroke-width="1.2" stroke-linejoin="round">
<path d="M1623.2,232.6 L1635.2,232.6 L1651.4,248.7 Q1652.2,249.5 1651.4,250.3 L1641.8,259.3 Q1641,260 1640.2,259.3 L1623.2,244.3 Z" fill="#fff"/>
<path d="M1623.2,244.3 L1630.4,244.3 L1638.3,252.2 L1635.5,254.9 Z" fill="#dcdcdc" stroke-width="1"/>
<path d="M1635.25,239.5 L1643.5,247.7 L1638.3,252.2 L1630.4,244.3 L1630.4,240.9 L1631.6,240 Z" fill="#ededed" stroke-width="1"/>
<path d="M1635.2,232.6 L1635.25,239.5" fill="none" stroke-width="1"/>
<path d="M1647.1,244.5 L1635.5,254.9 M1649,246.4 L1637.4,256.8" fill="none" stroke-width="1"/>
<path d="M1623.2,232.6 L1630.6,232.6 L1623.2,239.6 Z" fill="#222"/>
</g>
<!-- line tool -->
<line x1="1627" y1="271.3" x2="1648" y2="292.7" stroke="#333" stroke-width="3.4" stroke-linecap="round"/>
<line x1="1627" y1="271.3" x2="1648" y2="292.7" stroke="#fff" stroke-width="1.4" stroke-linecap="round"/>
<circle cx="1652" cy="271.5" r="4.9" fill="#ff1493"/>
<!-- eraser -->
<g stroke="#333" stroke-width="1.1" stroke-linejoin="round">
<path d="M1627.05,318.6 L1630.9,315.8 L1644.2,329.6 L1640.6,332.8 Z" fill="#d6d6d6"/>
<path d="M1630.9,315.8 L1638.1,308.4 L1652.4,321.9 L1644.2,329.6 Z" fill="#e6e6e6"/>
<path d="M1622.2,314.5 L1632.6,304.3 L1637.2,308.7 L1627.05,318.6 Z" fill="#f6f6f6"/>
<path d="M1626.3,310.85 L1630.9,315.4" fill="none"/>
<path d="M1652.4,321.9 L1653.8,324.6 L1643.4,334.5 L1640.6,332.8 Z" fill="#fff"/>
<path d="M1653,323.4 L1642.2,333.7" fill="none" stroke-width="0.8"/>
</g>
<!-- dot -->
<circle cx="1638" cy="357.8" r="3.5" fill="#222"/>
<!-- undo -->
<path d="M1624,391.4 L1634.3,383.2 L1634.3,388.6 L1642.5,388.6 C1648.5,388.6 1651.8,392.6 1651.8,397.8 C1651.8,403.4 1647.2,407 1639.7,407.2 L1639.7,402.7 C1644,402.5 1646.2,400.8 1646.2,397.8 C1646.2,395.6 1644.8,394.6 1642.5,394.6 L1634.3,394.6 L1634.3,400 Z" fill="#fff" stroke="#333" stroke-width="1.2" stroke-linejoin="miter"/>
<!-- trash -->
<g stroke="#444" stroke-width="1.1" fill="#f2f2f2">
<rect x="1635" y="419.3" width="6.2" height="2.3" rx="0.8"/>
<rect x="1628.8" y="427" width="18.8" height="15.3" fill="#f6f6f6"/>
<rect x="1627.3" y="421.6" width="21.5" height="5.6" rx="1.5" fill="#fff"/>
<rect x="1633.6" y="427.2" width="9" height="15" fill="#ececec" stroke-width="0.9"/>
<rect x="1630" y="442.2" width="16.6" height="2.4" rx="0.8"/>
</g>
<!-- board -->
<g stroke="#444" stroke-width="1.1">
<rect x="1633.8" y="456.7" width="7.4" height="2.6" rx="0.8" fill="#ddd"/>
<rect x="1626.3" y="459.4" width="22.4" height="16" rx="2" fill="#fff"/>
<rect x="1629" y="462.4" width="17" height="10.2" rx="0.8" fill="#dcdcdc"/>
<rect x="1630.6" y="475.6" width="13.8" height="2.2" fill="#eee"/>
<path d="M1633.2,478 L1631.8,483 L1633.4,483.4 L1635.2,478 Z M1640.2,478 L1641.8,483.4 L1643.4,483 L1642.2,478 Z" fill="#eee" stroke-width="0.9"/>
</g>
<circle cx="1652" cy="458.8" r="4.9" fill="#ff1493"/>
<!-- camera -->
<g stroke="#444" stroke-width="1.1" fill="#fff">
<path d="M1625.2,501.4 L1632.8,501.4 L1632.8,498.6 L1642.4,498.6 L1642.4,501.4 L1651.5,501.4 L1651.5,519.6 L1625.2,519.6 Z" stroke-linejoin="round"/>
<rect x="1634.6" y="500.2" width="6" height="1.4" fill="#444" stroke="none"/>
<circle cx="1634.6" cy="510" r="7"/>
<circle cx="1634.6" cy="510" r="4.6" fill="#333" stroke="none"/>
<circle cx="1636" cy="508.4" r="1.2" fill="#fff" stroke="none"/>
<circle cx="1646.9" cy="507.2" r="1.8" stroke-width="0.9"/>
</g>
<!-- clipboard -->
<g stroke="#444" stroke-width="1.2" fill="#fff">
<rect x="1627.3" y="534.4" width="21.5" height="23" rx="2"/>
<path d="M1632,535.5 C1633,533 1635.5,533.2 1636,531.6 C1636.6,530.2 1639.6,530.2 1640.2,531.6 C1640.7,533.2 1643.2,533 1644.2,535.5 Z" stroke-width="1"/>
<path d="M1631,540.7 L1645.6,540.7 M1631,545.7 L1645.6,545.7 M1631,550.6 L1645.6,550.6" stroke="#333" stroke-width="1.1" fill="none"/>
</g>
<!-- colors -->
<g shape-rendering="crispEdges">
<rect x="1620" y="564" width="18" height="19" fill="#00aeef"/>
<rect x="1638" y="564" width="19" height="19" fill="#fff200"/>
<rect x="1620" y="583" width="18" height="18" fill="#ff1090"/>
<rect x="1638" y="583" width="19" height="18" fill="#000"/>
<rect x="1620" y="601" width="37" height="38" fill="#fff200"/>
</g>
</svg>

</body></html>
